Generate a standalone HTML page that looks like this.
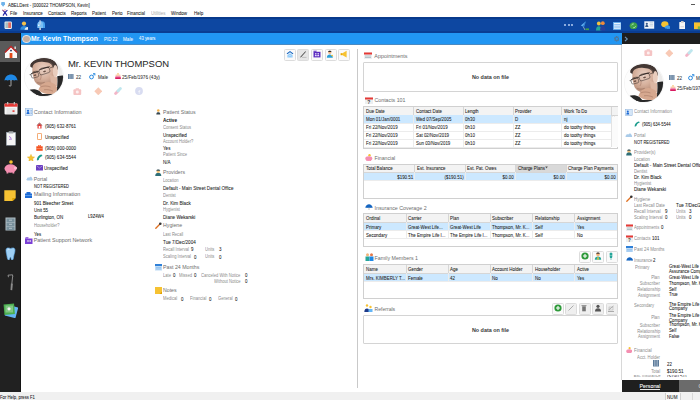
<!DOCTYPE html><html><head><meta charset="utf-8"><style>
html,body{margin:0;padding:0;width:700px;height:400px;overflow:hidden;background:#fff;}
body{position:relative;font-family:"Liberation Sans",sans-serif;}
.t{position:absolute;white-space:nowrap;}
.r{position:absolute;}
</style></head><body>
<div class="r" style="left:0px;top:0px;width:700px;height:9px;background:#fff"></div>
<svg class="r" style="left:0.9px;top:2px" width="4.2" height="5" viewBox="0 0 4.2 5"><path d="M0.2 0.6C0.2 0.2 .6 0 1 0h2.2c.4 0 .8.2.8.6v1.6L2.1 4.8 0.2 2.2z" fill="#6fb3ea"/></svg>
<div class="t" style="left:7.7px;top:0.20px;font-size:5.00px;line-height:10px;color:#222;transform:scaleX(0.88);transform-origin:0 50%;-webkit-text-stroke:0.06px currentColor;">ABELDent - [000022 THOMPSON, Kevin]</div>
<div class="r" style="left:691px;top:4px;width:4px;height:0.7px;background:#5a5a5a"></div>
<svg class="r" style="left:1.8px;top:9.2px" width="6" height="7" viewBox="0 0 6 7"><path d="M0.6 1.2L3 3.4 5.4 1.2M3 3.4L1 6.6M3 3.4L5 6.6" stroke="#2a2aa8" stroke-width="1.1" fill="none"/><path d="M0.4 0.9L2.2 2.4" stroke="#e57373" stroke-width="0.9"/><circle cx="3" cy="0.9" r="0.8" fill="#e9a0a0"/></svg>
<div class="t" style="left:10.1px;top:8.30px;font-size:5.11px;line-height:10px;color:#1a1a1a;transform:scaleX(0.88);transform-origin:0 50%;-webkit-text-stroke:0.06px currentColor;">File</div>
<div class="t" style="left:22.8px;top:8.30px;font-size:5.11px;line-height:10px;color:#1a1a1a;transform:scaleX(0.88);transform-origin:0 50%;-webkit-text-stroke:0.06px currentColor;">Insurance</div>
<div class="t" style="left:48px;top:8.30px;font-size:5.11px;line-height:10px;color:#1a1a1a;transform:scaleX(0.88);transform-origin:0 50%;-webkit-text-stroke:0.06px currentColor;">Contacts</div>
<div class="t" style="left:71.2px;top:8.30px;font-size:5.11px;line-height:10px;color:#1a1a1a;transform:scaleX(0.88);transform-origin:0 50%;-webkit-text-stroke:0.06px currentColor;">Reports</div>
<div class="t" style="left:91.8px;top:8.30px;font-size:5.11px;line-height:10px;color:#1a1a1a;transform:scaleX(0.88);transform-origin:0 50%;-webkit-text-stroke:0.06px currentColor;">Patient</div>
<div class="t" style="left:111.7px;top:8.30px;font-size:5.11px;line-height:10px;color:#1a1a1a;transform:scaleX(0.88);transform-origin:0 50%;-webkit-text-stroke:0.06px currentColor;">Perio</div>
<div class="t" style="left:127.4px;top:8.30px;font-size:5.11px;line-height:10px;color:#1a1a1a;transform:scaleX(0.88);transform-origin:0 50%;-webkit-text-stroke:0.06px currentColor;">Financial</div>
<div class="t" style="left:151px;top:8.30px;font-size:5.11px;line-height:10px;color:#a8a8a8;transform:scaleX(0.88);transform-origin:0 50%;">Utilities</div>
<div class="t" style="left:171.2px;top:8.30px;font-size:5.11px;line-height:10px;color:#1a1a1a;transform:scaleX(0.88);transform-origin:0 50%;-webkit-text-stroke:0.06px currentColor;">Window</div>
<div class="t" style="left:193.5px;top:8.30px;font-size:5.11px;line-height:10px;color:#1a1a1a;transform:scaleX(0.88);transform-origin:0 50%;-webkit-text-stroke:0.06px currentColor;">Help</div>
<div class="r" style="left:0px;top:17px;width:700px;height:16px;background:#0d47a1"></div>
<div class="r" style="left:0px;top:17px;width:700px;height:1.6px;background:#083a8c"></div>
<div class="r" style="left:0px;top:31px;width:700px;height:1.6px;background:#0a3d92"></div>
<svg class="r" style="left:3.8px;top:21px" width="8.4" height="8.4" viewBox="0 0 8.4 8.4"><rect x="0.5" y="0.5" width="7.4" height="7.4" rx="1.2" fill="#eef2f4"/><rect x="1.4" y="1.4" width="2.8" height="5.6" fill="#a7bfc2"/><rect x="4.2" y="1.4" width="2.8" height="5.6" fill="#df6a60"/></svg>
<svg class="r" style="left:19.5px;top:20.5px" width="8.5" height="9" viewBox="0 0 8.5 9"><circle cx="4" cy="2.6" r="2.1" fill="#f3c14a"/><path d="M0.3 8.8c0-2.8 1.6-3.8 3.7-3.8s3.7 1 3.7 3.8z" fill="#2f8fe0"/><path d="M4.5 8.8c.3-1.6 1.5-2.8 3.5-2.8v2.8z" fill="#e8f0f8"/></svg>
<svg class="r" style="left:36px;top:20.3px" width="9.5" height="10" viewBox="0 0 9.5 10"><path d="M1.5 4.5c0-2.2 1.5-3.3 3-3.3h1.5c1.8 0 3 1.2 3 3.3v3.5H1.5z" fill="#4aa3ee"/><path d="M1.5 4.5c0-2.2 1.5-3.3 3-3.3 1.5 0 2.5 1.2 2.5 3.3v3.5H1.5z" fill="#7cc0f5"/><rect x="3.6" y="0" width="0.9" height="4.5" fill="#d9d9e8"/><rect x="3.4" y="7.6" width="1.4" height="2.4" fill="#e0e0e0"/><circle cx="2.8" cy="5.2" r="0.8" fill="#fff"/></svg>
<svg class="r" style="left:564.2px;top:24.3px" width="2" height="2" viewBox="0 0 2 2"><circle cx="1" cy="1" r="0.9" fill="#c6dcfb"/></svg>
<svg class="r" style="left:567.5px;top:24.3px" width="2" height="2" viewBox="0 0 2 2"><circle cx="1" cy="1" r="0.9" fill="#c6dcfb"/></svg>
<svg class="r" style="left:570.8000000000001px;top:24.3px" width="2" height="2" viewBox="0 0 2 2"><circle cx="1" cy="1" r="0.9" fill="#c6dcfb"/></svg>
<svg class="r" style="left:579.8px;top:21px" width="9.5" height="9.5" viewBox="0 0 9.5 9.5"><path d="M6 0.3L0.8 4.6 2.8 5.6z" fill="#5fb0f2"/><path d="M6 0.3L2.8 5.6 4 6.3z" fill="#3d8fd8"/><path d="M3.4 6L5 9" stroke="#98a8b8" stroke-width="0.9"/><rect x="5.6" y="7.4" width="3.4" height="1.7" fill="#43a047"/></svg>
<svg class="r" style="left:596px;top:21px" width="9.5" height="9.5" viewBox="0 0 9.5 9.5"><circle cx="2.8" cy="2.5" r="1.9" fill="#f2c440"/><circle cx="6.8" cy="2.2" r="1.9" fill="#f08a3a"/><path d="M0 9.5c0-3 1-4.3 2.8-4.3s2.6 1.3 2.6 4.3z" fill="#26a69a"/><path d="M4 9.5c0-3.3 1-4.8 2.8-4.8s2.7 1.5 2.7 4.8z" fill="#283f9c"/></svg>
<svg class="r" style="left:612.8px;top:21.8px" width="8.4" height="8" viewBox="0 0 8.4 8"><rect x="0.4" y="0.4" width="7.6" height="7.2" fill="#e8f4fd" stroke="#5aa9ef" stroke-width="0.8"/><path d="M1.2 2.6h6M1.2 4.2h6M1.2 5.8h6" stroke="#6aaef0" stroke-width="0.7"/></svg>
<svg class="r" style="left:629.2px;top:21.6px" width="9" height="7.6" viewBox="0 0 9 7.6"><path d="M4.5 0.3C2.2 0.3 0.6 2 0.6 3.8c0 2 1.6 3.5 3.9 3.5s3.9-1.5 3.9-3.5C8.4 2 6.8 0.3 4.5 0.3z" fill="#3fa24a"/><path d="M2.5 3.3c.5-1 1.3-1.4 2.2-1.3M6.5 4.4c-.4 1-1.3 1.4-2.2 1.3" stroke="#c9ecc9" stroke-width="0.9" fill="none"/></svg>
<svg class="r" style="left:644.2px;top:21.2px" width="10.5" height="8.3" viewBox="0 0 10.5 8.3"><rect x="0.3" y="0.3" width="9.9" height="7.4" fill="#f2f6fa"/><circle cx="2.8" cy="2.8" r="1.1" fill="#37598a"/><path d="M1.2 6c0-1.4.7-2 1.6-2s1.6.6 1.6 2z" fill="#37598a"/><path d="M5.6 1.8h3.5M5.6 3.4h3.5M5.6 5h3.5" stroke="#b0c4d8" stroke-width="0.7"/></svg>
<svg class="r" style="left:660.8px;top:21.2px" width="9.5" height="8" viewBox="0 0 9.5 8"><ellipse cx="3.8" cy="3.2" rx="3.6" ry="3" fill="#f6c232"/><path d="M3.5 6.8C4 4.8 5.8 4 7.2 4.3 8.8 4.7 9.5 6 9.3 7.2L9.5 8 8 7.8C6.5 8.2 4.5 8 3.5 6.8z" fill="#3f9ae8"/></svg>
<svg class="r" style="left:678.5px;top:20.8px" width="6.6" height="8.6" viewBox="0 0 6.6 8.6"><rect x="0.3" y="1" width="6" height="7.4" rx="0.4" fill="#f5f5f5"/><rect x="2" y="0" width="2.6" height="1.8" fill="#c9c9c9"/><path d="M1.5 5.8h3.5" stroke="#aab" stroke-width="0.5"/></svg>
<svg class="r" style="left:693.5px;top:22.4px" width="6.5" height="7.2" viewBox="0 0 6.5 7.2"><rect x="0" y="0.4" width="6.5" height="6.8" fill="#f6c232"/><rect x="3.8" y="4.4" width="2.7" height="2.8" fill="#7cb342"/></svg>
<div class="r" style="left:0px;top:33px;width:21px;height:359px;background:#212121"></div>
<div class="r" style="left:20px;top:33px;width:1px;height:359px;background:#141414"></div>
<div class="r" style="left:0px;top:41px;width:20px;height:21px;background:#5a5a5a"></div>
<div class="r" style="left:21px;top:32.6px;width:601px;height:12px;background:#2196f3"></div>
<div class="r" style="left:21px;top:43.7px;width:601px;height:1.2px;background:#4a8ac2"></div>
<div class="r" style="left:22px;top:34.6px;width:6.8px;height:6.8px;border-radius:50%;background:#c4ad9f;border:0.7px solid #d5e2ee"></div>
<div class="t" style="left:31px;top:33.80px;font-size:6.80px;line-height:10px;color:#fff;font-weight:700;transform:scaleX(1.0);transform-origin:0 50%;">Mr. Kevin Thompson</div>
<div class="t" style="left:104.3px;top:34.40px;font-size:5.00px;line-height:10px;color:#f2f8ff;transform:scaleX(0.88);transform-origin:0 50%;-webkit-text-stroke:0.06px currentColor;">PID 22</div>
<div class="t" style="left:123.1px;top:34.40px;font-size:5.23px;line-height:10px;color:#f2f8ff;transform:scaleX(0.88);transform-origin:0 50%;-webkit-text-stroke:0.06px currentColor;">Male</div>
<div class="t" style="left:139.1px;top:34.40px;font-size:4.89px;line-height:10px;color:#f2f8ff;transform:scaleX(0.88);transform-origin:0 50%;-webkit-text-stroke:0.06px currentColor;">43 years</div>
<svg class="r" style="left:613.5px;top:36px" width="5.6" height="5.6" viewBox="0 0 5.6 5.6"><circle cx="2.8" cy="2.8" r="2.1" fill="none" stroke="#58708a" stroke-width="1.3" stroke-dasharray="0.9 0.45"/><circle cx="2.8" cy="2.8" r="1.5" fill="none" stroke="#58708a" stroke-width="0.6"/></svg>
<div class="r" style="left:622px;top:33px;width:78px;height:11.2px;background:#1e1e1e"></div>
<svg class="r" style="left:624.4px;top:36px" width="4.5" height="6" viewBox="0 0 4.5 6"><path d="M1 0.8L3.3 3 1 5.2" stroke="#6b92b8" stroke-width="1.1" fill="none"/></svg>
<div class="r" style="left:21px;top:44.9px;width:600px;height:347px;background:#fff"></div>
<div class="r" style="left:357px;top:48.5px;width:0.8px;height:339px;background:#c9c9c9"></div>
<div class="r" style="left:621px;top:44.5px;width:0.8px;height:335.5px;background:#d8d8d8"></div>
<div class="r" style="left:0px;top:392px;width:700px;height:8px;background:#f0f0f0"></div>
<div class="t" style="left:0px;top:392.50px;font-size:4.81px;line-height:10px;color:#222;transform:scaleX(0.88);transform-origin:0 50%;-webkit-text-stroke:0.06px currentColor;">For Help, press F1</div>
<svg class="r" style="left:3.8px;top:44.8px" width="14" height="13.5" viewBox="0 0 14 13.5"><path d="M7 1L1 6.8V13h12V6.8z" fill="#fafafa"/><path d="M7 0.6L0.4 7l1 1L7 2.6 12.6 8l1-1z" fill="#b71c1c"/><rect x="10.5" y="1.5" width="1.3" height="2.5" fill="#f0f0f0"/><rect x="5.6" y="8" width="2.8" height="5" fill="#e64a19"/><circle cx="7" cy="5.6" r="0.9" fill="#1a2a5a"/></svg>
<svg class="r" style="left:4px;top:74px" width="14" height="13" viewBox="0 0 14 13"><path d="M0.5 6.5C1 2.5 4 0.5 7 0.5s6 2 6.5 6c-1-.8-2-.8-3.2 0-1-.8-2.2-.8-3.3 0-1.1-.8-2.3-.8-3.3 0-1.2-.8-2.2-.8-3.2 0z" fill="#1e88e5"/><path d="M7 6v5.3c0 1.2-1.8 1.2-1.8 0" stroke="#ddd" stroke-width="0.7" fill="none"/></svg>
<svg class="r" style="left:4px;top:102px" width="14" height="13" viewBox="0 0 14 13"><rect x="0.5" y="1.5" width="13" height="11" rx="1" fill="#f5f5f5"/><rect x="0.5" y="1.5" width="13" height="3.2" fill="#e53935"/><rect x="3" y="0" width="1.3" height="2.5" fill="#bbb"/><rect x="9.7" y="0" width="1.3" height="2.5" fill="#bbb"/><path d="M2.5 7h9M2.5 9h9M2.5 11h9" stroke="#cfcfcf" stroke-width="0.8"/><rect x="8.5" y="8.3" width="2" height="1.6" fill="#e53935"/></svg>
<svg class="r" style="left:5.5px;top:131px" width="10" height="14.5" viewBox="0 0 10 14.5"><rect x="0.4" y="1.4" width="9.2" height="12.8" fill="#f5f5f5" stroke="#9ab" stroke-width="0.4"/><rect x="2.6" y="0.2" width="4.8" height="2.4" rx="0.5" fill="#a0a4a8"/><path d="M3 5.5c1 .3 2 1 2.2 2.2M3.2 8.5c.8-.4 1.6-.5 2.3 0" stroke="#9c5fd0" stroke-width="0.9" fill="none"/></svg>
<svg class="r" style="left:3px;top:160px" width="15" height="14" viewBox="0 0 15 14"><circle cx="8" cy="2" r="1.8" fill="#f6c232"/><ellipse cx="7.5" cy="8.5" rx="6" ry="4.3" fill="#f48fb1"/><rect x="3.5" y="11" width="1.8" height="2.5" fill="#f48fb1"/><rect x="9.5" y="11" width="1.8" height="2.5" fill="#f48fb1"/><circle cx="12.5" cy="8" r="1.6" fill="#f8bbd0"/></svg>
<svg class="r" style="left:4.4px;top:189.8px" width="12" height="11.6" viewBox="0 0 12 11.6"><path d="M0.3 0.3h11.4v7.6l-3.4 3.4H0.3z" fill="#f6c232"/><path d="M11.7 7.9H8.3v3.4z" fill="#dca000"/></svg>
<svg class="r" style="left:5px;top:217px" width="11" height="14" viewBox="0 0 11 14"><rect x="0.5" y="0.5" width="10" height="13" fill="#b0bec5"/><rect x="1.5" y="1.5" width="8" height="3.5" fill="#78909c"/><rect x="1.5" y="5.6" width="8" height="3.5" fill="#78909c"/><rect x="1.5" y="9.6" width="8" height="3.4" fill="#78909c"/><path d="M4 3.2h3M4 7.3h3M4 11.3h3" stroke="#cfd8dc" stroke-width="0.7"/></svg>
<svg class="r" style="left:5px;top:246.5px" width="11" height="13.5" viewBox="0 0 11 13.5"><path d="M1 3C1 0.5 3.5 0.5 5.5 1.5 7.5 0.5 10 0.5 10 3c0 3-1 4-1.3 6.5-.3 2.5-.7 3.6-1.7 3.6s-1-3.2-1.5-3.2S4.5 13.1 3.8 13.1 2.3 12 2 9.5C1.7 7 1 6 1 3z" fill="#9fd0f5" stroke="#5aa6e6" stroke-width="0.6"/><path d="M2.6 3.2c.3-1 1.2-1.3 2-1" stroke="#e8f5fe" stroke-width="0.8" fill="none"/></svg>
<svg class="r" style="left:6px;top:273.5px" width="9" height="17" viewBox="0 0 9 17"><path d="M2.5 3.2L2 1.2 6.5 0.8 6.8 3" stroke="#a8a8a8" stroke-width="0.8" fill="none"/><path d="M6.6 2.8L5.8 10" stroke="#9a9a9a" stroke-width="0.9"/><path d="M4.9 9.5L6.9 9.8 6.2 16.3 4.5 16z" fill="#8d8d8d"/></svg>
<svg class="r" style="left:3px;top:303px" width="15" height="15" viewBox="0 0 15 15"><rect x="3" y="3" width="11" height="11" fill="#64b5f6" transform="rotate(15 8.5 8.5)"/><rect x="1" y="1" width="10.5" height="10.5" fill="#4caf50" transform="rotate(-5 6 6)"/><rect x="2.5" y="2.5" width="7.5" height="7" fill="#81c784"/><circle cx="6" cy="5.8" r="1.6" fill="#f5f5f5"/></svg>
<svg class="r" style="left:24.3px;top:57px" width="40" height="40" viewBox="0 0 40 40"><defs><clipPath id="pcL"><circle cx="20" cy="20" r="19.1"/></clipPath>
<radialGradient id="fgL" cx="0.5" cy="0.3" r="0.7"><stop offset="0" stop-color="#e9d2c6"/><stop offset="0.55" stop-color="#d6b09c"/><stop offset="1" stop-color="#b68b76"/></radialGradient></defs>
<circle cx="20" cy="20" r="19.6" fill="#fff" stroke="#efefef" stroke-width="0.6"/>
<g clip-path="url(#pcL)">
<rect x="0" y="0" width="40" height="40" fill="#fdfdfd"/>
<path d="M33 6 L40 8 L40 22 L35 20z" fill="#ecebea"/>
<path d="M8.2 9 C9 5.5 13 4 18 4.2 C25 4.4 29 7 30 12 L31 21 C31 27 27 30 22 30 C17 30 12.5 27.5 10.5 24 L8.5 17z" fill="url(#fgL)"/>
<path d="M26 18 L33 20 L33.5 29 L27 29z" fill="#dcb7a3"/>
<path d="M6.2 9.5 C6 3.5 13 0.8 20.5 0.9 C28 1 33 4.5 34 11.5 L33.5 13 L30.5 13 L29.8 9.5 C27.5 6.5 24 5 18 4.8 C13.5 4.7 10.5 5.8 9 8.5 L8.4 11z" fill="#433733"/>
<path d="M24.5 4.6 C28 5.8 30 8.2 30.5 11.5 L30.8 13.5 L29.6 13 C29 9.5 27 6.5 24.5 4.6z" fill="#5e4d45"/>
<ellipse cx="31.3" cy="14.2" rx="2.5" ry="6.2" fill="#e9cdbd"/>
<path d="M33.2 19.2 C35 19 37.5 18.5 40 18.5 L40 40 L31 40 C33 34 34 27 33.2 19.2z" fill="#282828"/>
<path d="M0 40 L4 33.5 C8 31.5 12 32 15.5 34 L21 40z" fill="#282828"/>
<rect x="12" y="37" width="20" height="3" fill="#282828"/>
<path d="M8.5 15.2 C10.5 14.2 12.8 14 14.6 14.4 M16.5 11.6 C19 10.6 22.5 10.2 25 10.4" stroke="#5a463c" stroke-width="0.7" fill="none"/>
<ellipse cx="11" cy="18.2" rx="1.4" ry="0.75" fill="#6a5046" transform="rotate(-15 11 18.2)"/>
<ellipse cx="20.5" cy="14.4" rx="1.5" ry="0.8" fill="#6a5046" transform="rotate(-18 20.5 14.4)"/>
<path d="M16.8 17 C17.3 20 17 22 15.8 23" stroke="#a87c6a" stroke-width="0.6" fill="none"/>
<rect x="7.2" y="15.5" width="7.4" height="5" rx="1.4" fill="none" stroke="#2a2220" stroke-width="0.45" transform="rotate(-15 10.9 18)"/>
<rect x="15.2" y="11.2" width="10.6" height="5.6" rx="1.6" fill="none" stroke="#2a2220" stroke-width="0.45" transform="rotate(-18 20.5 14)"/>
<path d="M7.2 16.6 L14.6 14.4 M15.2 12.8 L25.8 9.6" stroke="#1d1817" stroke-width="0.65"/>
<path d="M25.8 11 L30 9.5 M7.2 17.8 L5.6 17.6" stroke="#2a2220" stroke-width="0.55"/>
<path d="M14.5 33 C15.5 28.5 19.5 24.8 24.5 25 C29 25.3 32.5 27.5 33.2 31.5 L32 36.7 C26 37.5 19 37.5 14.5 33z" fill="#d6a88f"/>
<path d="M16.5 30 C19.5 28.5 23.5 28.8 26.5 30 M20 32.8 C23 32.3 26 32.8 29 34.2" stroke="#a07360" stroke-width="0.55" fill="none"/>
<path d="M13.2 25.5 C15.5 26.5 18.5 26.3 20.7 25.3" stroke="#946a58" stroke-width="0.6" fill="none"/>
</g></svg>
<div class="t" style="left:67.6px;top:59.30px;font-size:9.95px;line-height:10px;color:#2a2a2a;transform:scaleX(0.95);transform-origin:0 50%;-webkit-text-stroke:0.06px currentColor;">Mr. KEVIN THOMPSON</div>
<svg class="r" style="left:68.2px;top:73.5px" width="5.5" height="5.5" viewBox="0 0 5.5 5.5"><rect x="0" y="0" width="5.5" height="5.5" fill="#5c7a99"/><path d="M1.4 0v5.5M2.8 0v5.5M4.2 0v5.5" stroke="#c9d6e3" stroke-width="0.5"/></svg>
<div class="t" style="left:76px;top:71.90px;font-size:5.23px;line-height:10px;color:#333;transform:scaleX(0.88);transform-origin:0 50%;-webkit-text-stroke:0.06px currentColor;">22</div>
<svg class="r" style="left:89px;top:73px" width="6.5" height="6.5" viewBox="0 0 6.5 6.5"><circle cx="2.5" cy="4" r="1.9" fill="none" stroke="#2b8be0" stroke-width="1"/><path d="M3.8 2.7L5.8 0.7M4 0.6h1.9v1.9" stroke="#2b8be0" stroke-width="0.9" fill="none"/></svg>
<div class="t" style="left:97.7px;top:71.90px;font-size:5.23px;line-height:10px;color:#333;transform:scaleX(0.88);transform-origin:0 50%;-webkit-text-stroke:0.06px currentColor;">Male</div>
<svg class="r" style="left:115px;top:73px" width="6" height="6" viewBox="0 0 6 6"><rect x="0.6" y="1.6" width="4.8" height="1.3" fill="#f9c9a8"/><rect x="0.4" y="2.9" width="5.2" height="1.3" fill="#f48fb1"/><rect x="0.2" y="4.2" width="5.6" height="1.8" fill="#d81b60"/><rect x="2.6" y="0" width="0.8" height="1.6" fill="#f6a623"/></svg>
<div class="t" style="left:122px;top:71.90px;font-size:5.28px;line-height:10px;color:#333;transform:scaleX(0.88);transform-origin:0 50%;-webkit-text-stroke:0.06px currentColor;">25/Feb/1976 (43y)</div>
<svg class="r" style="left:73.4px;top:87.5px" width="8.6" height="7.2" viewBox="0 0 8.6 7.2"><rect x="0.4" y="1.3" width="7.8" height="5.6" rx="0.9" fill="#f5c4c4"/><rect x="2.6" y="0.2" width="3.4" height="1.6" rx="0.4" fill="#f5c4c4"/><circle cx="4.3" cy="4.1" r="1.5" fill="#fdf0f0"/></svg>
<svg class="r" style="left:93.8px;top:86.8px" width="8.6" height="8.6" viewBox="0 0 8.6 8.6"><path d="M4.3 0.3L8.3 4.3 4.3 8.3 0.3 4.3z" fill="#f8c9b5"/></svg>
<svg class="r" style="left:114.2px;top:87.1px" width="8" height="8" viewBox="0 0 8 8"><path d="M1.6 6.4L4 4" stroke="#f3b6c8" stroke-width="2.8" stroke-linecap="round"/><path d="M4 4L6.4 1.6" stroke="#bfe7ee" stroke-width="2.8" stroke-linecap="round"/></svg>
<svg class="r" style="left:134.8px;top:87.1px" width="8" height="8" viewBox="0 0 8 8"><circle cx="4" cy="4" r="3.9" fill="#d8dcf1"/><path d="M4.2 6.8V3.6h1.1M3.2 4.6h2" stroke="#f4f5fb" stroke-width="0.8" fill="none"/></svg>
<svg class="r" style="left:24.5px;top:108px" width="8" height="8" viewBox="0 0 8 8"><rect x="0.3" y="0.3" width="7.4" height="7.4" fill="#d6e6f7" stroke="#8fb4dc" stroke-width="0.5"/><circle cx="3" cy="2.8" r="1.1" fill="#1e6bd6"/><path d="M1.5 6c0-1.5.7-2 1.5-2s1.5.5 1.5 2z" fill="#1e6bd6"/><path d="M5.5 2.5h1.5M5.5 4h1.5M5.5 5.5h1.5" stroke="#6a9bd8" stroke-width="0.5"/></svg>
<div class="t" style="left:33.8px;top:106.80px;font-size:5.47px;line-height:10px;color:#6d6d6d;transform:scaleX(1.0);transform-origin:0 50%;">Contact Information</div>
<svg class="r" style="left:35.5px;top:122px" width="7" height="7" viewBox="0 0 7 7"><path d="M3.5 0.5L0.5 3.5h1V6.5h4V3.5h1z" fill="#e53935"/><path d="M3.5 0.5L0.5 3.5h1l2-2 2 2h1z" fill="#999"/><rect x="2.7" y="4" width="1.6" height="2.5" fill="#fff"/></svg>
<div class="t" style="left:44.7px;top:120.90px;font-size:5.17px;line-height:10px;color:#1a1a1a;transform:scaleX(0.88);transform-origin:0 50%;-webkit-text-stroke:0.06px currentColor;">(905) 632-8761</div>
<svg class="r" style="left:37px;top:133px" width="5" height="7" viewBox="0 0 5 7"><rect x="0.4" y="0.4" width="4.2" height="6.2" rx="0.8" fill="none" stroke="#f0883a" stroke-width="0.8"/></svg>
<div class="t" style="left:44.7px;top:132.10px;font-size:5.17px;line-height:10px;color:#1a1a1a;transform:scaleX(0.88);transform-origin:0 50%;-webkit-text-stroke:0.06px currentColor;">Unspecified</div>
<svg class="r" style="left:36px;top:144.5px" width="7" height="6" viewBox="0 0 7 6"><rect x="0.3" y="1.3" width="6.4" height="4.5" fill="#f4511e"/><rect x="2.3" y="0.2" width="2.4" height="1.4" fill="none" stroke="#f4511e" stroke-width="0.6"/><rect x="0.3" y="3" width="6.4" height="0.4" fill="#ffccbc"/></svg>
<div class="t" style="left:44.7px;top:143.10px;font-size:5.17px;line-height:10px;color:#1a1a1a;transform:scaleX(0.88);transform-origin:0 50%;-webkit-text-stroke:0.06px currentColor;">(905) 000-0000</div>
<svg class="r" style="left:26.5px;top:153.5px" width="8" height="7" viewBox="0 0 8 7"><path d="M4 0.3l1.1 2.4 2.6.3-2 1.8.6 2.6L4 6 1.7 7.4l.6-2.6-2-1.8 2.6-.3z" fill="#f6c232" stroke="#d9a400" stroke-width="0.3"/></svg>
<svg class="r" style="left:36px;top:153.5px" width="7" height="7" viewBox="0 0 7 7"><path d="M1 6.5C0.5 4 2.5 1 5.5 0.5l1 1.5c-2 .5-3.5 2-3.8 4z" fill="#1a9b8c"/></svg>
<div class="t" style="left:44.7px;top:152.40px;font-size:5.17px;line-height:10px;color:#1a1a1a;transform:scaleX(0.88);transform-origin:0 50%;-webkit-text-stroke:0.06px currentColor;">(905) 634-5544</div>
<svg class="r" style="left:35.5px;top:165px" width="7" height="5.5" viewBox="0 0 7 5.5"><rect x="0" y="0" width="7" height="5.5" fill="#6a3fc2"/><path d="M0.3 0.5L3.5 3 6.7 0.5" stroke="#c9b5ef" stroke-width="0.6" fill="none"/></svg>
<div class="t" style="left:43.7px;top:163.40px;font-size:5.17px;line-height:10px;color:#1a1a1a;transform:scaleX(0.88);transform-origin:0 50%;-webkit-text-stroke:0.06px currentColor;">Unspecified</div>
<svg class="r" style="left:25.5px;top:176px" width="7" height="5" viewBox="0 0 7 5"><path d="M1.5 4.6C0.3 4.6 0 3.2 1 2.8 1 1.5 2.5 1 3.2 1.8 3.8 0.3 6 0.5 6 2.3 7 2.5 7 4.6 5.8 4.6z" fill="#a9cbe9"/></svg>
<div class="t" style="left:33.7px;top:173.50px;font-size:5.20px;line-height:10px;color:#6d6d6d;transform:scaleX(1.0);transform-origin:0 50%;">Portal</div>
<div class="t" style="left:33.7px;top:181.70px;font-size:4.49px;line-height:10px;color:#1a1a1a;transform:scaleX(0.88);transform-origin:0 50%;-webkit-text-stroke:0.06px currentColor;">NOT REGISTERED</div>
<svg class="r" style="left:25px;top:191.5px" width="7" height="6.5" viewBox="0 0 7 6.5"><rect x="0" y="1.5" width="7" height="5" fill="#1e6bd6"/><rect x="1.5" y="0" width="4" height="2" fill="#1e6bd6"/><path d="M0 3.5h7" stroke="#90caf9" stroke-width="0.5"/></svg>
<div class="t" style="left:33.7px;top:189.30px;font-size:5.54px;line-height:10px;color:#6d6d6d;transform:scaleX(1.0);transform-origin:0 50%;">Mailing Information</div>
<div class="t" style="left:33.7px;top:197.90px;font-size:5.06px;line-height:10px;color:#1a1a1a;transform:scaleX(0.88);transform-origin:0 50%;-webkit-text-stroke:0.06px currentColor;">901 Bleecher Street</div>
<div class="t" style="left:33.7px;top:204.90px;font-size:5.06px;line-height:10px;color:#1a1a1a;transform:scaleX(0.88);transform-origin:0 50%;-webkit-text-stroke:0.06px currentColor;">Unit 55</div>
<div class="t" style="left:33.7px;top:212.15px;font-size:5.06px;line-height:10px;color:#1a1a1a;transform:scaleX(0.88);transform-origin:0 50%;-webkit-text-stroke:0.06px currentColor;">Burlington, ON</div>
<div class="t" style="left:87.8px;top:212.45px;font-size:4.77px;line-height:10px;color:#1a1a1a;transform:scaleX(0.88);transform-origin:0 50%;-webkit-text-stroke:0.06px currentColor;">L9Z4W4</div>
<div class="t" style="left:33.7px;top:221.20px;font-size:4.66px;line-height:10px;color:#8a8a8a;transform:scaleX(0.88);transform-origin:0 50%;">Householder?</div>
<div class="t" style="left:33.7px;top:228.65px;font-size:5.06px;line-height:10px;color:#1a1a1a;transform:scaleX(0.88);transform-origin:0 50%;-webkit-text-stroke:0.06px currentColor;">Yes</div>
<svg class="r" style="left:25px;top:236.5px" width="7.5" height="7" viewBox="0 0 7.5 7"><rect x="0" y="1.5" width="7.5" height="5.5" fill="#7b3fd6"/><path d="M0 1.5h3l.7-1.3h-3z" fill="#7b3fd6"/><circle cx="3" cy="4" r="0.9" fill="#d1c4e9"/><circle cx="5.2" cy="4" r="0.9" fill="#d1c4e9"/></svg>
<div class="t" style="left:33.7px;top:234.80px;font-size:5.42px;line-height:10px;color:#6d6d6d;transform:scaleX(1.0);transform-origin:0 50%;">Patient Support Network</div>
<svg class="r" style="left:156.3px;top:109.4px" width="4.6" height="5.8" viewBox="0 0 4.6 5.8"><circle cx="2.3" cy="1.5" r="1.3" fill="#f2b04a"/><path d="M0.3 5.6c0-1.9.8-2.4 2-2.4s2 .5 2 2.4z" fill="#37474f"/></svg>
<div class="t" style="left:163px;top:106.80px;font-size:5.22px;line-height:10px;color:#6d6d6d;transform:scaleX(1.0);transform-origin:0 50%;">Patient Status</div>
<div class="t" style="left:163px;top:115.40px;font-size:5.30px;line-height:10px;color:#111;font-weight:700;transform:scaleX(0.88);transform-origin:0 50%;">Active</div>
<div class="t" style="left:163px;top:122.70px;font-size:4.66px;line-height:10px;color:#8a8a8a;transform:scaleX(0.88);transform-origin:0 50%;">Consent Status</div>
<div class="t" style="left:163px;top:129.90px;font-size:5.17px;line-height:10px;color:#1a1a1a;transform:scaleX(0.88);transform-origin:0 50%;-webkit-text-stroke:0.06px currentColor;">Unspecified</div>
<div class="t" style="left:163px;top:136.95px;font-size:4.66px;line-height:10px;color:#8a8a8a;transform:scaleX(0.88);transform-origin:0 50%;">Account Holder?</div>
<div class="t" style="left:163px;top:142.90px;font-size:5.17px;line-height:10px;color:#1a1a1a;transform:scaleX(0.88);transform-origin:0 50%;-webkit-text-stroke:0.06px currentColor;">Yes</div>
<div class="t" style="left:163px;top:150.20px;font-size:4.66px;line-height:10px;color:#8a8a8a;transform:scaleX(0.88);transform-origin:0 50%;">Patient Since</div>
<div class="t" style="left:163px;top:156.90px;font-size:5.17px;line-height:10px;color:#1a1a1a;transform:scaleX(0.88);transform-origin:0 50%;-webkit-text-stroke:0.06px currentColor;">N/A</div>
<svg class="r" style="left:155.3px;top:169px" width="6.5" height="7" viewBox="0 0 6.5 7"><circle cx="3.25" cy="2.4" r="1.7" fill="#f0c27a"/><path d="M1.3 1.8C1.3 0.2 5.2 0.2 5.2 1.8z" fill="#2b4a56"/><path d="M0.2 7c0-2.6 1.3-3.1 3.05-3.1s3.05.5 3.05 3.1z" fill="#2f6f78"/></svg>
<div class="t" style="left:163px;top:167.30px;font-size:5.22px;line-height:10px;color:#6d6d6d;transform:scaleX(1.0);transform-origin:0 50%;">Providers</div>
<div class="t" style="left:163px;top:175.70px;font-size:4.66px;line-height:10px;color:#8a8a8a;transform:scaleX(0.88);transform-origin:0 50%;">Location</div>
<div class="t" style="left:163px;top:182.90px;font-size:5.28px;line-height:10px;color:#1a1a1a;transform:scaleX(0.88);transform-origin:0 50%;-webkit-text-stroke:0.06px currentColor;">Default - Main Street Dental Office</div>
<div class="t" style="left:163px;top:190.70px;font-size:4.66px;line-height:10px;color:#8a8a8a;transform:scaleX(0.88);transform-origin:0 50%;">Dentist</div>
<div class="t" style="left:163px;top:197.90px;font-size:5.28px;line-height:10px;color:#1a1a1a;transform:scaleX(0.88);transform-origin:0 50%;-webkit-text-stroke:0.06px currentColor;">Dr. Kim Black</div>
<div class="t" style="left:163px;top:205.20px;font-size:4.66px;line-height:10px;color:#8a8a8a;transform:scaleX(0.88);transform-origin:0 50%;">Hygienist</div>
<div class="t" style="left:163px;top:212.40px;font-size:5.28px;line-height:10px;color:#1a1a1a;transform:scaleX(0.88);transform-origin:0 50%;-webkit-text-stroke:0.06px currentColor;">Diane Wekarski</div>
<svg class="r" style="left:154.5px;top:222px" width="7" height="7" viewBox="0 0 7 7"><path d="M0.8 6.3L4.5 2.5" stroke="#e07020" stroke-width="1.3" stroke-linecap="round"/><circle cx="5.3" cy="1.7" r="1.3" fill="#333"/></svg>
<div class="t" style="left:163px;top:220.30px;font-size:5.22px;line-height:10px;color:#6d6d6d;transform:scaleX(1.0);transform-origin:0 50%;">Hygiene</div>
<div class="t" style="left:163px;top:230.20px;font-size:4.66px;line-height:10px;color:#8a8a8a;transform:scaleX(0.88);transform-origin:0 50%;">Last Recall</div>
<div class="t" style="left:163px;top:236.90px;font-size:5.28px;line-height:10px;color:#1a1a1a;transform:scaleX(0.88);transform-origin:0 50%;-webkit-text-stroke:0.06px currentColor;">Tue 7/Dec/2004</div>
<div class="t" style="left:163px;top:244.70px;font-size:4.66px;line-height:10px;color:#8a8a8a;transform:scaleX(0.88);transform-origin:0 50%;">Recall Interval</div>
<div class="t" style="left:191px;top:244.10px;font-size:5.00px;line-height:10px;color:#222;transform:scaleX(0.88);transform-origin:0 50%;-webkit-text-stroke:0.06px currentColor;">9</div>
<div class="t" style="left:204.5px;top:244.70px;font-size:4.66px;line-height:10px;color:#8a8a8a;transform:scaleX(0.88);transform-origin:0 50%;">Units</div>
<div class="t" style="left:218.5px;top:244.10px;font-size:5.00px;line-height:10px;color:#222;transform:scaleX(0.88);transform-origin:0 50%;-webkit-text-stroke:0.06px currentColor;">3</div>
<div class="t" style="left:163px;top:252.20px;font-size:4.66px;line-height:10px;color:#8a8a8a;transform:scaleX(0.88);transform-origin:0 50%;">Scaling Interval</div>
<div class="t" style="left:194.2px;top:251.60px;font-size:5.00px;line-height:10px;color:#222;transform:scaleX(0.88);transform-origin:0 50%;-webkit-text-stroke:0.06px currentColor;">0</div>
<div class="t" style="left:204.5px;top:252.20px;font-size:4.66px;line-height:10px;color:#8a8a8a;transform:scaleX(0.88);transform-origin:0 50%;">Units</div>
<div class="t" style="left:218.5px;top:251.60px;font-size:5.00px;line-height:10px;color:#222;transform:scaleX(0.88);transform-origin:0 50%;-webkit-text-stroke:0.06px currentColor;">0</div>
<svg class="r" style="left:155px;top:264px" width="7" height="6.5" viewBox="0 0 7 6.5"><rect x="0" y="0" width="7" height="6.5" fill="#bfdcf6"/><rect x="0" y="0" width="7" height="2" fill="#2f80d8"/><path d="M1 3.6h5M1 5h5" stroke="#6aa8e8" stroke-width="0.5"/></svg>
<div class="t" style="left:163px;top:261.80px;font-size:5.22px;line-height:10px;color:#6d6d6d;transform:scaleX(1.0);transform-origin:0 50%;">Past 24 Months</div>
<div class="t" style="left:163px;top:270.70px;font-size:4.66px;line-height:10px;color:#8a8a8a;transform:scaleX(0.88);transform-origin:0 50%;">Late</div>
<div class="t" style="left:173.3px;top:270.10px;font-size:5.00px;line-height:10px;color:#222;transform:scaleX(0.88);transform-origin:0 50%;-webkit-text-stroke:0.06px currentColor;">0</div>
<div class="t" style="left:178.75px;top:270.70px;font-size:4.66px;line-height:10px;color:#8a8a8a;transform:scaleX(0.88);transform-origin:0 50%;">Missed</div>
<div class="t" style="left:194px;top:270.10px;font-size:5.00px;line-height:10px;color:#222;transform:scaleX(0.88);transform-origin:0 50%;-webkit-text-stroke:0.06px currentColor;">0</div>
<div class="t" style="left:200.75px;top:270.70px;font-size:4.66px;line-height:10px;color:#8a8a8a;transform:scaleX(0.88);transform-origin:0 50%;">Canceled With Notice</div>
<div class="t" style="left:245.3px;top:270.10px;font-size:5.00px;line-height:10px;color:#222;transform:scaleX(0.88);transform-origin:0 50%;-webkit-text-stroke:0.06px currentColor;">0</div>
<div class="t" style="left:213.75px;top:276.95px;font-size:4.66px;line-height:10px;color:#8a8a8a;transform:scaleX(0.88);transform-origin:0 50%;">Without Notice</div>
<div class="t" style="left:245.3px;top:276.35px;font-size:5.00px;line-height:10px;color:#222;transform:scaleX(0.88);transform-origin:0 50%;-webkit-text-stroke:0.06px currentColor;">0</div>
<svg class="r" style="left:155px;top:287px" width="7" height="7" viewBox="0 0 7 7"><rect x="0" y="0" width="7" height="7" fill="#f6c232"/><path d="M7 4.5L4.5 7H7z" fill="#e0a000"/></svg>
<div class="t" style="left:163px;top:285.10px;font-size:5.22px;line-height:10px;color:#6d6d6d;transform:scaleX(1.0);transform-origin:0 50%;">Notes</div>
<div class="t" style="left:163px;top:294.20px;font-size:4.66px;line-height:10px;color:#8a8a8a;transform:scaleX(0.88);transform-origin:0 50%;">Medical</div>
<div class="t" style="left:181px;top:293.60px;font-size:5.00px;line-height:10px;color:#222;transform:scaleX(0.88);transform-origin:0 50%;-webkit-text-stroke:0.06px currentColor;">0</div>
<div class="t" style="left:189.5px;top:294.20px;font-size:4.66px;line-height:10px;color:#8a8a8a;transform:scaleX(0.88);transform-origin:0 50%;">Financial</div>
<div class="t" style="left:208.6px;top:293.60px;font-size:5.00px;line-height:10px;color:#222;transform:scaleX(0.88);transform-origin:0 50%;-webkit-text-stroke:0.06px currentColor;">0</div>
<div class="t" style="left:218px;top:294.20px;font-size:4.66px;line-height:10px;color:#8a8a8a;transform:scaleX(0.88);transform-origin:0 50%;">General</div>
<div class="t" style="left:234.7px;top:293.60px;font-size:5.00px;line-height:10px;color:#222;transform:scaleX(0.88);transform-origin:0 50%;-webkit-text-stroke:0.06px currentColor;">0</div>
<div class="r" style="left:284.3px;top:48.6px;width:10px;height:10px;border:0.5px solid #dcdcdc;border-radius:1.5px;background:#fafafa"></div>
<svg class="r" style="left:285.8px;top:50.1px" width="8" height="8" viewBox="0 0 8 8"><path d="M0.6 3.6L4 1 7.4 3.6 6.6 4.3 4 2.3 1.4 4.3z" fill="#1565c0"/><path d="M1.4 5.3L4 3.3 6.6 5.3V7.6H1.4z" fill="#90caf9"/><path d="M2.5 6.2L4 5 5.5 6.2" stroke="#e3f2fd" stroke-width="0.5" fill="none"/></svg>
<div class="r" style="left:297.4px;top:48.6px;width:10px;height:10px;border:0.5px solid #dcdcdc;border-radius:1.5px;background:#e6e6e6"></div>
<svg class="r" style="left:298.9px;top:50.1px" width="8" height="8" viewBox="0 0 8 8"><path d="M1.6 6.6L6.4 1.2 7 1.8 2.3 7.1z" fill="#4a4a4a"/><path d="M1.2 7.4L1.6 6.6 2.3 7.1z" fill="#222"/><path d="M3 7.4h4.5" stroke="#b5b5b5" stroke-width="0.8"/></svg>
<div class="r" style="left:311.2px;top:48.6px;width:10px;height:10px;border:0.5px solid #dcdcdc;border-radius:1.5px;background:#fafafa"></div>
<svg class="r" style="left:312.7px;top:50.1px" width="8" height="8" viewBox="0 0 8 8"><rect x="0.5" y="1.8" width="7" height="5.6" fill="#5b2bbf"/><path d="M0.5 1.8h2.8l.6-1h-3.4z" fill="#5b2bbf"/><circle cx="2.8" cy="3.8" r="0.8" fill="#e8defa"/><path d="M1.8 6.2c0-1 .4-1.4 1-1.4s1 .4 1 1.4z" fill="#e8defa"/><circle cx="5.2" cy="3.8" r="0.8" fill="#e8defa"/><path d="M4.2 6.2c0-1 .4-1.4 1-1.4s1 .4 1 1.4z" fill="#e8defa"/></svg>
<div class="r" style="left:324.8px;top:48.6px;width:10px;height:10px;border:0.5px solid #dcdcdc;border-radius:1.5px;background:#fafafa"></div>
<svg class="r" style="left:326.3px;top:50.1px" width="8" height="8" viewBox="0 0 8 8"><circle cx="3.8" cy="2.4" r="1.6" fill="#f0b98a"/><path d="M2.1 2C2.1 0.4 5.5 0.4 5.5 2z" fill="#3b2f2a"/><path d="M0.8 7.8c0-2.6 1.4-3.4 3-3.4s3 .8 3 3.4z" fill="#2a9fd6"/><path d="M4.5 5.5L6.8 4.8 7.2 6.5z" fill="#f6c232"/></svg>
<div class="r" style="left:338px;top:48.6px;width:10px;height:10px;border:0.5px solid #dcdcdc;border-radius:1.5px;background:#fafafa"></div>
<svg class="r" style="left:339.5px;top:50.1px" width="8" height="8" viewBox="0 0 8 8"><path d="M0.8 4.2L6.6 0.8v6.8z" fill="#f6c232"/><rect x="0.6" y="3.2" width="1.6" height="2" fill="#e9a800"/></svg>
<svg class="r" style="left:364px;top:52px" width="8" height="7" viewBox="0 0 8 7"><rect x="0" y="0.5" width="8" height="6.5" fill="#eceff1"/><rect x="0" y="0.5" width="8" height="2" fill="#e53935"/><path d="M1 4h6M1 5.5h6" stroke="#90a4ae" stroke-width="0.6"/></svg>
<div class="t" style="left:374.3px;top:51.30px;font-size:5.43px;line-height:10px;color:#6d6d6d;transform:scaleX(1.0);transform-origin:0 50%;">Appointments</div>
<div class="r" style="left:363.3px;top:61.6px;width:253.2px;height:27.999999999999993px;border:0.6px solid #d4d4d4;border-radius:1px;background:#fff"></div>
<div class="t" style="left:450.5px;width:80px;text-align:center;top:72.00px;font-size:5.40px;line-height:10px;color:#3a3a3a;font-weight:700;transform:scaleX(1.0);transform-origin:50% 50%;">No data on file</div>
<svg class="r" style="left:364.5px;top:96.5px" width="8" height="7" viewBox="0 0 8 7"><rect x="0" y="0.5" width="8" height="6.5" fill="#eceff1"/><rect x="0" y="0.5" width="8" height="2" fill="#e53935"/><text x="2.3" y="6.8" font-size="5" font-family="Liberation Sans" font-weight="700" fill="#333">?</text></svg>
<div class="t" style="left:374.5px;top:95.30px;font-size:5.26px;line-height:10px;color:#6d6d6d;transform:scaleX(1.0);transform-origin:0 50%;">Contacts 101</div>
<div class="r" style="left:363.3px;top:106.2px;width:253.2px;height:40.8px;border:0.6px solid #d0d0d0;background:#fff"></div>
<div class="r" style="left:363.90000000000003px;top:106.8px;width:253.0px;height:7.8px;background:#f3f3f3;border-bottom:0.6px solid #d6d6d6"></div>
<div class="r" style="left:363.90000000000003px;top:115.19999999999999px;width:247.0px;height:8.1px;background:#cce8ff"></div>
<div class="r" style="left:363.90000000000003px;top:122.79999999999998px;width:247.0px;height:0.5px;background:#ececec"></div>
<div class="r" style="left:363.90000000000003px;top:130.89999999999998px;width:247.0px;height:0.5px;background:#ececec"></div>
<div class="r" style="left:363.90000000000003px;top:138.99999999999997px;width:247.0px;height:0.5px;background:#ececec"></div>
<div class="r" style="left:363.90000000000003px;top:147.09999999999997px;width:247.0px;height:0.5px;background:#ececec"></div>
<div class="r" style="left:413.3px;top:106.8px;width:0.6px;height:7.8px;background:#d6d6d6"></div>
<div class="r" style="left:413.3px;top:114.6px;width:0.6px;height:32.4px;background:#ececec"></div>
<div class="r" style="left:463px;top:106.8px;width:0.6px;height:7.8px;background:#d6d6d6"></div>
<div class="r" style="left:463px;top:114.6px;width:0.6px;height:32.4px;background:#ececec"></div>
<div class="r" style="left:512.5px;top:106.8px;width:0.6px;height:7.8px;background:#d6d6d6"></div>
<div class="r" style="left:512.5px;top:114.6px;width:0.6px;height:32.4px;background:#ececec"></div>
<div class="r" style="left:561.3px;top:106.8px;width:0.6px;height:7.8px;background:#d6d6d6"></div>
<div class="r" style="left:561.3px;top:114.6px;width:0.6px;height:32.4px;background:#ececec"></div>
<div class="t" style="left:365.5px;top:105.60px;font-size:5.06px;line-height:10px;color:#222;transform:scaleX(0.88);transform-origin:0 50%;-webkit-text-stroke:0.06px currentColor;">Due Date</div>
<div class="t" style="left:415.5px;top:105.60px;font-size:5.06px;line-height:10px;color:#222;transform:scaleX(0.88);transform-origin:0 50%;-webkit-text-stroke:0.06px currentColor;">Contact Date</div>
<div class="t" style="left:465.2px;top:105.60px;font-size:5.06px;line-height:10px;color:#222;transform:scaleX(0.88);transform-origin:0 50%;-webkit-text-stroke:0.06px currentColor;">Length</div>
<div class="t" style="left:514.7px;top:105.60px;font-size:5.06px;line-height:10px;color:#222;transform:scaleX(0.88);transform-origin:0 50%;-webkit-text-stroke:0.06px currentColor;">Provider</div>
<div class="t" style="left:563.5px;top:105.60px;font-size:5.06px;line-height:10px;color:#222;transform:scaleX(0.88);transform-origin:0 50%;-webkit-text-stroke:0.06px currentColor;">Work To Do</div>
<div class="t" style="left:365.5px;top:114.05px;font-size:5.06px;line-height:10px;color:#222;transform:scaleX(0.88);transform-origin:0 50%;-webkit-text-stroke:0.06px currentColor;">Mon 01/Jan/0001</div>
<div class="t" style="left:415.5px;top:114.05px;font-size:5.06px;line-height:10px;color:#222;transform:scaleX(0.88);transform-origin:0 50%;-webkit-text-stroke:0.06px currentColor;">Wed 07/Sep/2005</div>
<div class="t" style="left:465.2px;top:114.05px;font-size:5.06px;line-height:10px;color:#222;transform:scaleX(0.88);transform-origin:0 50%;-webkit-text-stroke:0.06px currentColor;">0h30</div>
<div class="t" style="left:514.7px;top:114.05px;font-size:5.06px;line-height:10px;color:#222;transform:scaleX(0.88);transform-origin:0 50%;-webkit-text-stroke:0.06px currentColor;">D</div>
<div class="t" style="left:563.5px;top:114.05px;font-size:5.06px;line-height:10px;color:#222;transform:scaleX(0.88);transform-origin:0 50%;-webkit-text-stroke:0.06px currentColor;">nj</div>
<div class="t" style="left:365.5px;top:122.15px;font-size:5.06px;line-height:10px;color:#222;transform:scaleX(0.88);transform-origin:0 50%;-webkit-text-stroke:0.06px currentColor;">Fri 22/Nov/2019</div>
<div class="t" style="left:415.5px;top:122.15px;font-size:5.06px;line-height:10px;color:#222;transform:scaleX(0.88);transform-origin:0 50%;-webkit-text-stroke:0.06px currentColor;">Fri 01/Nov/2019</div>
<div class="t" style="left:465.2px;top:122.15px;font-size:5.06px;line-height:10px;color:#222;transform:scaleX(0.88);transform-origin:0 50%;-webkit-text-stroke:0.06px currentColor;">0h10</div>
<div class="t" style="left:514.7px;top:122.15px;font-size:5.06px;line-height:10px;color:#222;transform:scaleX(0.88);transform-origin:0 50%;-webkit-text-stroke:0.06px currentColor;">ZZ</div>
<div class="t" style="left:563.5px;top:122.15px;font-size:5.06px;line-height:10px;color:#222;transform:scaleX(0.88);transform-origin:0 50%;-webkit-text-stroke:0.06px currentColor;">do toothy things</div>
<div class="t" style="left:365.5px;top:130.25px;font-size:5.06px;line-height:10px;color:#222;transform:scaleX(0.88);transform-origin:0 50%;-webkit-text-stroke:0.06px currentColor;">Fri 22/Nov/2019</div>
<div class="t" style="left:415.5px;top:130.25px;font-size:5.06px;line-height:10px;color:#222;transform:scaleX(0.88);transform-origin:0 50%;-webkit-text-stroke:0.06px currentColor;">Sat 02/Nov/2019</div>
<div class="t" style="left:465.2px;top:130.25px;font-size:5.06px;line-height:10px;color:#222;transform:scaleX(0.88);transform-origin:0 50%;-webkit-text-stroke:0.06px currentColor;">0h10</div>
<div class="t" style="left:514.7px;top:130.25px;font-size:5.06px;line-height:10px;color:#222;transform:scaleX(0.88);transform-origin:0 50%;-webkit-text-stroke:0.06px currentColor;">ZZ</div>
<div class="t" style="left:563.5px;top:130.25px;font-size:5.06px;line-height:10px;color:#222;transform:scaleX(0.88);transform-origin:0 50%;-webkit-text-stroke:0.06px currentColor;">do toothy things</div>
<div class="t" style="left:365.5px;top:138.35px;font-size:5.06px;line-height:10px;color:#222;transform:scaleX(0.88);transform-origin:0 50%;-webkit-text-stroke:0.06px currentColor;">Fri 22/Nov/2019</div>
<div class="t" style="left:415.5px;top:138.35px;font-size:5.06px;line-height:10px;color:#222;transform:scaleX(0.88);transform-origin:0 50%;-webkit-text-stroke:0.06px currentColor;">Sun 03/Nov/2019</div>
<div class="t" style="left:465.2px;top:138.35px;font-size:5.06px;line-height:10px;color:#222;transform:scaleX(0.88);transform-origin:0 50%;-webkit-text-stroke:0.06px currentColor;">0h10</div>
<div class="t" style="left:514.7px;top:138.35px;font-size:5.06px;line-height:10px;color:#222;transform:scaleX(0.88);transform-origin:0 50%;-webkit-text-stroke:0.06px currentColor;">ZZ</div>
<div class="t" style="left:563.5px;top:138.35px;font-size:5.06px;line-height:10px;color:#222;transform:scaleX(0.88);transform-origin:0 50%;-webkit-text-stroke:0.06px currentColor;">do toothy things</div>
<div class="r" style="left:610.7px;top:106.8px;width:6.2px;height:40.599999999999994px;background:#fbfbfb;border-left:0.6px solid #e3e3e3"></div>
<div class="r" style="left:610.7px;top:106.8px;width:6.2px;height:7.8px;background:#f3f3f3;border-bottom:0.6px solid #d6d6d6;border-left:0.6px solid #d6d6d6"></div>
<svg class="r" style="left:612.3px;top:115.2px" width="3" height="2" viewBox="0 0 3 2"><path d="M0.3 1.7L1.5 0.4 2.7 1.7" stroke="#c8c8c8" stroke-width="0.5" fill="none"/></svg>
<svg class="r" style="left:365px;top:153.5px" width="7.5" height="7" viewBox="0 0 7.5 7"><circle cx="4.5" cy="1.3" r="1.2" fill="#f6c232"/><ellipse cx="3.8" cy="4.6" rx="3.5" ry="2.3" fill="#f48fb1"/><rect x="1.5" y="5.8" width="1" height="1.2" fill="#f48fb1"/><rect x="5" y="5.8" width="1" height="1.2" fill="#f48fb1"/></svg>
<div class="t" style="left:374.5px;top:152.80px;font-size:5.20px;line-height:10px;color:#6d6d6d;transform:scaleX(1.0);transform-origin:0 50%;">Financial</div>
<div class="r" style="left:363.3px;top:164.0px;width:253.2px;height:32.5px;border:0.6px solid #d0d0d0;background:#fff"></div>
<div class="r" style="left:363.90000000000003px;top:164.6px;width:253.0px;height:7.6px;background:#f3f3f3;border-bottom:0.6px solid #d6d6d6"></div>
<div class="r" style="left:515.5999999999999px;top:164.6px;width:50.600000000000094px;height:7.6px;background:#d9d9d9"></div>
<div class="r" style="left:363.90000000000003px;top:172.79999999999998px;width:253.0px;height:8.0px;background:#cce8ff"></div>
<div class="r" style="left:363.90000000000003px;top:180.29999999999998px;width:253.0px;height:0.5px;background:#ececec"></div>
<div class="r" style="left:414.3px;top:164.6px;width:0.6px;height:7.6px;background:#d6d6d6"></div>
<div class="r" style="left:414.3px;top:172.2px;width:0.6px;height:8.0px;background:#ececec"></div>
<div class="r" style="left:465px;top:164.6px;width:0.6px;height:7.6px;background:#d6d6d6"></div>
<div class="r" style="left:465px;top:172.2px;width:0.6px;height:8.0px;background:#ececec"></div>
<div class="r" style="left:515.3px;top:164.6px;width:0.6px;height:7.6px;background:#d6d6d6"></div>
<div class="r" style="left:515.3px;top:172.2px;width:0.6px;height:8.0px;background:#ececec"></div>
<div class="r" style="left:566.2px;top:164.6px;width:0.6px;height:7.6px;background:#d6d6d6"></div>
<div class="r" style="left:566.2px;top:172.2px;width:0.6px;height:8.0px;background:#ececec"></div>
<div class="t" style="left:365.5px;top:163.30px;font-size:5.06px;line-height:10px;color:#222;transform:scaleX(0.88);transform-origin:0 50%;-webkit-text-stroke:0.06px currentColor;">Total Balance</div>
<div class="t" style="left:416.5px;top:163.30px;font-size:5.06px;line-height:10px;color:#222;transform:scaleX(0.88);transform-origin:0 50%;-webkit-text-stroke:0.06px currentColor;">Est. Insurance</div>
<div class="t" style="left:467.2px;top:163.30px;font-size:5.06px;line-height:10px;color:#222;transform:scaleX(0.88);transform-origin:0 50%;-webkit-text-stroke:0.06px currentColor;">Est. Pat. Owes</div>
<div class="t" style="left:517.5px;top:163.30px;font-size:5.06px;line-height:10px;color:#222;transform:scaleX(0.88);transform-origin:0 50%;-webkit-text-stroke:0.06px currentColor;">Charge Plans</div>
<div class="t" style="left:568.4000000000001px;top:163.30px;font-size:5.06px;line-height:10px;color:#222;transform:scaleX(0.88);transform-origin:0 50%;-webkit-text-stroke:0.06px currentColor;">Charge Plan Payments</div>
<div class="t" style="right:287.2px;top:171.60px;font-size:5.06px;line-height:10px;color:#222;transform:scaleX(0.88);transform-origin:100% 50%;-webkit-text-stroke:0.06px currentColor;">$190.51</div>
<div class="t" style="right:236.5px;top:171.60px;font-size:5.06px;line-height:10px;color:#222;transform:scaleX(0.88);transform-origin:100% 50%;-webkit-text-stroke:0.06px currentColor;">($190.51)</div>
<div class="t" style="right:186.20000000000005px;top:171.60px;font-size:5.06px;line-height:10px;color:#222;transform:scaleX(0.88);transform-origin:100% 50%;-webkit-text-stroke:0.06px currentColor;">$0.00</div>
<div class="t" style="right:135.29999999999995px;top:171.60px;font-size:5.06px;line-height:10px;color:#222;transform:scaleX(0.88);transform-origin:100% 50%;-webkit-text-stroke:0.06px currentColor;">$0.00</div>
<div class="t" style="right:84.0px;top:171.60px;font-size:5.06px;line-height:10px;color:#222;transform:scaleX(0.88);transform-origin:100% 50%;-webkit-text-stroke:0.06px currentColor;">$0.00</div>
<svg class="r" style="left:545px;top:165.8px" width="3" height="3" viewBox="0 0 3 3"><path d="M0.2 0.5h2.6L1.5 2.5z" fill="#555"/></svg>
<svg class="r" style="left:365px;top:203.5px" width="8" height="6.5" viewBox="0 0 8 6.5"><path d="M0.3 4C0.6 1.5 2.3 0.3 4 0.3s3.4 1.2 3.7 3.7c-.6-.5-1.2-.5-1.8 0-.6-.5-1.3-.5-1.9 0-.6-.5-1.3-.5-1.9 0-.6-.5-1.2-.5-1.8 0z" fill="#1565c0"/><path d="M4 3.5v2.7" stroke="#888" stroke-width="0.5"/></svg>
<div class="t" style="left:374.5px;top:203.10px;font-size:5.30px;line-height:10px;color:#6d6d6d;transform:scaleX(1.0);transform-origin:0 50%;">Insurance Coverage 2</div>
<div class="r" style="left:363.3px;top:213.3px;width:253.2px;height:32.19999999999999px;border:0.6px solid #d0d0d0;background:#fff"></div>
<div class="r" style="left:363.90000000000003px;top:213.9px;width:253.0px;height:8.2px;background:#f3f3f3;border-bottom:0.6px solid #d6d6d6"></div>
<div class="r" style="left:363.90000000000003px;top:222.7px;width:253.0px;height:8.1px;background:#cce8ff"></div>
<div class="r" style="left:363.90000000000003px;top:230.29999999999998px;width:253.0px;height:0.5px;background:#ececec"></div>
<div class="r" style="left:363.90000000000003px;top:238.39999999999998px;width:253.0px;height:0.5px;background:#ececec"></div>
<div class="r" style="left:406.2px;top:213.9px;width:0.6px;height:8.2px;background:#d6d6d6"></div>
<div class="r" style="left:406.2px;top:222.1px;width:0.6px;height:16.2px;background:#ececec"></div>
<div class="r" style="left:448px;top:213.9px;width:0.6px;height:8.2px;background:#d6d6d6"></div>
<div class="r" style="left:448px;top:222.1px;width:0.6px;height:16.2px;background:#ececec"></div>
<div class="r" style="left:490px;top:213.9px;width:0.6px;height:8.2px;background:#d6d6d6"></div>
<div class="r" style="left:490px;top:222.1px;width:0.6px;height:16.2px;background:#ececec"></div>
<div class="r" style="left:532.3px;top:213.9px;width:0.6px;height:8.2px;background:#d6d6d6"></div>
<div class="r" style="left:532.3px;top:222.1px;width:0.6px;height:16.2px;background:#ececec"></div>
<div class="r" style="left:574.3px;top:213.9px;width:0.6px;height:8.2px;background:#d6d6d6"></div>
<div class="r" style="left:574.3px;top:222.1px;width:0.6px;height:16.2px;background:#ececec"></div>
<div class="t" style="left:365.5px;top:212.90px;font-size:5.06px;line-height:10px;color:#222;transform:scaleX(0.88);transform-origin:0 50%;-webkit-text-stroke:0.06px currentColor;">Ordinal</div>
<div class="t" style="left:408.4px;top:212.90px;font-size:5.06px;line-height:10px;color:#222;transform:scaleX(0.88);transform-origin:0 50%;-webkit-text-stroke:0.06px currentColor;">Carrier</div>
<div class="t" style="left:450.2px;top:212.90px;font-size:5.06px;line-height:10px;color:#222;transform:scaleX(0.88);transform-origin:0 50%;-webkit-text-stroke:0.06px currentColor;">Plan</div>
<div class="t" style="left:492.2px;top:212.90px;font-size:5.06px;line-height:10px;color:#222;transform:scaleX(0.88);transform-origin:0 50%;-webkit-text-stroke:0.06px currentColor;">Subscriber</div>
<div class="t" style="left:534.5px;top:212.90px;font-size:5.06px;line-height:10px;color:#222;transform:scaleX(0.88);transform-origin:0 50%;-webkit-text-stroke:0.06px currentColor;">Relationship</div>
<div class="t" style="left:576.5px;top:212.90px;font-size:5.06px;line-height:10px;color:#222;transform:scaleX(0.88);transform-origin:0 50%;-webkit-text-stroke:0.06px currentColor;">Assignment</div>
<div class="t" style="left:365.5px;top:221.55px;font-size:5.06px;line-height:10px;color:#222;transform:scaleX(0.88);transform-origin:0 50%;-webkit-text-stroke:0.06px currentColor;">Primary</div>
<div class="t" style="left:408.4px;top:221.55px;font-size:5.06px;line-height:10px;color:#222;transform:scaleX(0.88);transform-origin:0 50%;-webkit-text-stroke:0.06px currentColor;">Great-West Life...</div>
<div class="t" style="left:450.2px;top:221.55px;font-size:5.06px;line-height:10px;color:#222;transform:scaleX(0.88);transform-origin:0 50%;-webkit-text-stroke:0.06px currentColor;">Great-West Life</div>
<div class="t" style="left:492.2px;top:221.55px;font-size:5.06px;line-height:10px;color:#222;transform:scaleX(0.88);transform-origin:0 50%;-webkit-text-stroke:0.06px currentColor;">Thompson, Mr. K...</div>
<div class="t" style="left:534.5px;top:221.55px;font-size:5.06px;line-height:10px;color:#222;transform:scaleX(0.88);transform-origin:0 50%;-webkit-text-stroke:0.06px currentColor;">Self</div>
<div class="t" style="left:576.5px;top:221.55px;font-size:5.06px;line-height:10px;color:#222;transform:scaleX(0.88);transform-origin:0 50%;-webkit-text-stroke:0.06px currentColor;">Yes</div>
<div class="t" style="left:365.5px;top:229.65px;font-size:5.06px;line-height:10px;color:#222;transform:scaleX(0.88);transform-origin:0 50%;-webkit-text-stroke:0.06px currentColor;">Secondary</div>
<div class="t" style="left:408.4px;top:229.65px;font-size:5.06px;line-height:10px;color:#222;transform:scaleX(0.88);transform-origin:0 50%;-webkit-text-stroke:0.06px currentColor;">The Empire Life I...</div>
<div class="t" style="left:450.2px;top:229.65px;font-size:5.06px;line-height:10px;color:#222;transform:scaleX(0.88);transform-origin:0 50%;-webkit-text-stroke:0.06px currentColor;">The Empire Life I...</div>
<div class="t" style="left:492.2px;top:229.65px;font-size:5.06px;line-height:10px;color:#222;transform:scaleX(0.88);transform-origin:0 50%;-webkit-text-stroke:0.06px currentColor;">Thompson, Mr. K...</div>
<div class="t" style="left:534.5px;top:229.65px;font-size:5.06px;line-height:10px;color:#222;transform:scaleX(0.88);transform-origin:0 50%;-webkit-text-stroke:0.06px currentColor;">Self</div>
<div class="t" style="left:576.5px;top:229.65px;font-size:5.06px;line-height:10px;color:#222;transform:scaleX(0.88);transform-origin:0 50%;-webkit-text-stroke:0.06px currentColor;">No</div>
<svg class="r" style="left:364.5px;top:252.5px" width="9" height="8" viewBox="0 0 9 8"><circle cx="2.5" cy="1.8" r="1.5" fill="#f2b37a"/><circle cx="6.5" cy="1.8" r="1.5" fill="#e57a4a"/><rect x="0.5" y="3.5" width="4" height="4.5" fill="#26a69a"/><rect x="4.5" y="3.5" width="4" height="4.5" fill="#1e88e5"/></svg>
<div class="t" style="left:374.5px;top:253.10px;font-size:5.29px;line-height:10px;color:#6d6d6d;transform:scaleX(1.0);transform-origin:0 50%;">Family Members 1</div>
<div class="r" style="left:579px;top:250.8px;width:10px;height:10px;border:0.5px solid #dcdcdc;border-radius:1.5px;background:#fafafa"></div>
<svg class="r" style="left:580.5px;top:252.3px" width="8" height="8" viewBox="0 0 8 8"><circle cx="4" cy="4" r="3.6" fill="#2e9a3a"/><path d="M4 2v4M2 4h4" stroke="#fff" stroke-width="1.1"/></svg>
<div class="r" style="left:592.3px;top:250.8px;width:10px;height:10px;border:0.5px solid #dcdcdc;border-radius:1.5px;background:#fafafa"></div>
<svg class="r" style="left:593.8px;top:252.3px" width="8" height="8" viewBox="0 0 8 8"><circle cx="4" cy="2.5" r="1.8" fill="#f2b37a"/><path d="M2.2 1.8C2.2 0.2 5.8 0.2 5.8 1.8z" fill="#3b2f2a"/><path d="M0.8 7.8c0-2.6 1.4-3.2 3.2-3.2s3.2.6 3.2 3.2z" fill="#26a69a"/><rect x="3.3" y="5.2" width="1.4" height="2.6" fill="#f6c232"/></svg>
<div class="r" style="left:605.8px;top:250.8px;width:10px;height:10px;border:0.5px solid #dcdcdc;border-radius:1.5px;background:#fafafa"></div>
<svg class="r" style="left:607.3px;top:252.3px" width="8" height="8" viewBox="0 0 8 8"><circle cx="4" cy="2" r="1.5" fill="#26a69a"/><path d="M2.5 3.5h3l-.5 2.5h-2z" fill="#26a69a"/><path d="M4 6v2" stroke="#26a69a" stroke-width="0.6"/></svg>
<div class="r" style="left:363.3px;top:264.3px;width:253.2px;height:33.0px;border:0.6px solid #d0d0d0;background:#fff"></div>
<div class="r" style="left:363.90000000000003px;top:264.90000000000003px;width:253.0px;height:8.2px;background:#f3f3f3;border-bottom:0.6px solid #d6d6d6"></div>
<div class="r" style="left:363.90000000000003px;top:273.70000000000005px;width:253.0px;height:8.1px;background:#cce8ff"></div>
<div class="r" style="left:363.90000000000003px;top:281.30000000000007px;width:253.0px;height:0.5px;background:#ececec"></div>
<div class="r" style="left:406.2px;top:264.90000000000003px;width:0.6px;height:8.2px;background:#d6d6d6"></div>
<div class="r" style="left:406.2px;top:273.1px;width:0.6px;height:8.1px;background:#ececec"></div>
<div class="r" style="left:448px;top:264.90000000000003px;width:0.6px;height:8.2px;background:#d6d6d6"></div>
<div class="r" style="left:448px;top:273.1px;width:0.6px;height:8.1px;background:#ececec"></div>
<div class="r" style="left:490px;top:264.90000000000003px;width:0.6px;height:8.2px;background:#d6d6d6"></div>
<div class="r" style="left:490px;top:273.1px;width:0.6px;height:8.1px;background:#ececec"></div>
<div class="r" style="left:532.3px;top:264.90000000000003px;width:0.6px;height:8.2px;background:#d6d6d6"></div>
<div class="r" style="left:532.3px;top:273.1px;width:0.6px;height:8.1px;background:#ececec"></div>
<div class="r" style="left:574.3px;top:264.90000000000003px;width:0.6px;height:8.2px;background:#d6d6d6"></div>
<div class="r" style="left:574.3px;top:273.1px;width:0.6px;height:8.1px;background:#ececec"></div>
<div class="t" style="left:365.5px;top:263.90px;font-size:5.06px;line-height:10px;color:#222;transform:scaleX(0.88);transform-origin:0 50%;-webkit-text-stroke:0.06px currentColor;">Name</div>
<div class="t" style="left:408.4px;top:263.90px;font-size:5.06px;line-height:10px;color:#222;transform:scaleX(0.88);transform-origin:0 50%;-webkit-text-stroke:0.06px currentColor;">Gender</div>
<div class="t" style="left:450.2px;top:263.90px;font-size:5.06px;line-height:10px;color:#222;transform:scaleX(0.88);transform-origin:0 50%;-webkit-text-stroke:0.06px currentColor;">Age</div>
<div class="t" style="left:492.2px;top:263.90px;font-size:5.06px;line-height:10px;color:#222;transform:scaleX(0.88);transform-origin:0 50%;-webkit-text-stroke:0.06px currentColor;">Account Holder</div>
<div class="t" style="left:534.5px;top:263.90px;font-size:5.06px;line-height:10px;color:#222;transform:scaleX(0.88);transform-origin:0 50%;-webkit-text-stroke:0.06px currentColor;">Householder</div>
<div class="t" style="left:576.5px;top:263.90px;font-size:5.06px;line-height:10px;color:#222;transform:scaleX(0.88);transform-origin:0 50%;-webkit-text-stroke:0.06px currentColor;">Active</div>
<div class="t" style="left:365.5px;top:272.55px;font-size:5.06px;line-height:10px;color:#222;transform:scaleX(0.88);transform-origin:0 50%;-webkit-text-stroke:0.06px currentColor;">Mrs. KIMBERLY T...</div>
<div class="t" style="left:408.4px;top:272.55px;font-size:5.06px;line-height:10px;color:#222;transform:scaleX(0.88);transform-origin:0 50%;-webkit-text-stroke:0.06px currentColor;">Female</div>
<div class="t" style="left:450.2px;top:272.55px;font-size:5.06px;line-height:10px;color:#222;transform:scaleX(0.88);transform-origin:0 50%;-webkit-text-stroke:0.06px currentColor;">42</div>
<div class="t" style="left:492.2px;top:272.55px;font-size:5.06px;line-height:10px;color:#222;transform:scaleX(0.88);transform-origin:0 50%;-webkit-text-stroke:0.06px currentColor;">No</div>
<div class="t" style="left:534.5px;top:272.55px;font-size:5.06px;line-height:10px;color:#222;transform:scaleX(0.88);transform-origin:0 50%;-webkit-text-stroke:0.06px currentColor;">No</div>
<div class="t" style="left:576.5px;top:272.55px;font-size:5.06px;line-height:10px;color:#222;transform:scaleX(0.88);transform-origin:0 50%;-webkit-text-stroke:0.06px currentColor;">Yes</div>
<svg class="r" style="left:363.8px;top:303.5px" width="9" height="8" viewBox="0 0 9 8"><circle cx="3" cy="1.5" r="1.2" fill="#f6c232"/><circle cx="6.5" cy="3" r="1.2" fill="#f6c232"/><path d="M0.3 8c0-2.5 1.2-3.5 2.7-3.5s2.7 1 2.7 3.5z" fill="#1e3a8a"/><rect x="4.5" y="5" width="4" height="3" fill="#64b5f6"/></svg>
<div class="t" style="left:374.5px;top:303.70px;font-size:5.10px;line-height:10px;color:#6d6d6d;transform:scaleX(1.0);transform-origin:0 50%;">Referrals</div>
<div class="r" style="left:552px;top:302.8px;width:10px;height:10px;border:0.5px solid #dcdcdc;border-radius:1.5px;background:#fafafa"></div>
<svg class="r" style="left:553.5px;top:304.3px" width="8" height="8" viewBox="0 0 8 8"><circle cx="4" cy="4" r="3.6" fill="#2e9a3a"/><path d="M4 2v4M2 4h4" stroke="#fff" stroke-width="1.1"/></svg>
<div class="r" style="left:565.3px;top:302.8px;width:10px;height:10px;border:0.5px solid #dcdcdc;border-radius:1.5px;background:#efefef"></div>
<svg class="r" style="left:566.8px;top:304.3px" width="8" height="8" viewBox="0 0 8 8"><path d="M1.5 6.5L6.5 1.5" stroke="#9a9a9a" stroke-width="0.8"/></svg>
<div class="r" style="left:578.8px;top:302.8px;width:10px;height:10px;border:0.5px solid #dcdcdc;border-radius:1.5px;background:#efefef"></div>
<svg class="r" style="left:580.3px;top:304.3px" width="8" height="8" viewBox="0 0 8 8"><rect x="2.2" y="2.3" width="3.6" height="5" fill="#757575"/><rect x="1.5" y="1.3" width="5" height="0.8" fill="#757575"/></svg>
<div class="r" style="left:592.3px;top:302.8px;width:10px;height:10px;border:0.5px solid #dcdcdc;border-radius:1.5px;background:#efefef"></div>
<svg class="r" style="left:593.8px;top:304.3px" width="8" height="8" viewBox="0 0 8 8"><circle cx="4" cy="2.3" r="1.6" fill="#555"/><path d="M1 7.5c0-2.4 1.2-3.2 3-3.2s3 .8 3 3.2z" fill="#555"/></svg>
<div class="r" style="left:605.8px;top:302.8px;width:10px;height:10px;border:0.5px solid #dcdcdc;border-radius:1.5px;background:#efefef"></div>
<svg class="r" style="left:607.3px;top:304.3px" width="8" height="8" viewBox="0 0 8 8"><path d="M1 7.5h6M1.5 6l5-4" stroke="#999" stroke-width="0.8"/><rect x="2" y="3" width="4" height="3" fill="none" stroke="#aaa" stroke-width="0.5"/></svg>
<div class="r" style="left:363.3px;top:315.1px;width:253.2px;height:27.399999999999977px;border:0.6px solid #d4d4d4;border-radius:1px;background:#fff"></div>
<div class="t" style="left:450.5px;width:80px;text-align:center;top:325.40px;font-size:5.40px;line-height:10px;color:#3a3a3a;font-weight:700;transform:scaleX(1.0);transform-origin:50% 50%;">No data on file</div>
<svg class="r" style="left:644.3000000000001px;top:49.199999999999996px" width="8.6" height="7.2" viewBox="0 0 8.6 7.2"><rect x="0.4" y="1.3" width="7.8" height="5.6" rx="0.9" fill="#f5c4c4"/><rect x="2.6" y="0.2" width="3.4" height="1.6" rx="0.4" fill="#f5c4c4"/><circle cx="4.3" cy="4.1" r="1.5" fill="#fdf0f0"/></svg>
<svg class="r" style="left:664.7px;top:48.5px" width="8.6" height="8.6" viewBox="0 0 8.6 8.6"><path d="M4.3 0.3L8.3 4.3 4.3 8.3 0.3 4.3z" fill="#f8c9b5"/></svg>
<svg class="r" style="left:685.1px;top:48.8px" width="8" height="8" viewBox="0 0 8 8"><path d="M1.6 6.4L4 4" stroke="#f3b6c8" stroke-width="2.8" stroke-linecap="round"/><path d="M4 4L6.4 1.6" stroke="#bfe7ee" stroke-width="2.8" stroke-linecap="round"/></svg>
<svg class="r" style="left:705.7px;top:48.8px" width="8" height="8" viewBox="0 0 8 8"><circle cx="4" cy="4" r="3.9" fill="#d8dcf1"/><path d="M4.2 6.8V3.6h1.1M3.2 4.6h2" stroke="#f4f5fb" stroke-width="0.8" fill="none"/></svg>
<svg class="r" style="left:624.2px;top:63px" width="40" height="40" viewBox="0 0 40 40"><defs><clipPath id="pcR"><circle cx="20" cy="20" r="19.1"/></clipPath>
<radialGradient id="fgR" cx="0.5" cy="0.3" r="0.7"><stop offset="0" stop-color="#e9d2c6"/><stop offset="0.55" stop-color="#d6b09c"/><stop offset="1" stop-color="#b68b76"/></radialGradient></defs>
<circle cx="20" cy="20" r="19.6" fill="#fff" stroke="#efefef" stroke-width="0.6"/>
<g clip-path="url(#pcR)">
<rect x="0" y="0" width="40" height="40" fill="#fdfdfd"/>
<path d="M33 6 L40 8 L40 22 L35 20z" fill="#ecebea"/>
<path d="M8.2 9 C9 5.5 13 4 18 4.2 C25 4.4 29 7 30 12 L31 21 C31 27 27 30 22 30 C17 30 12.5 27.5 10.5 24 L8.5 17z" fill="url(#fgR)"/>
<path d="M26 18 L33 20 L33.5 29 L27 29z" fill="#dcb7a3"/>
<path d="M6.2 9.5 C6 3.5 13 0.8 20.5 0.9 C28 1 33 4.5 34 11.5 L33.5 13 L30.5 13 L29.8 9.5 C27.5 6.5 24 5 18 4.8 C13.5 4.7 10.5 5.8 9 8.5 L8.4 11z" fill="#433733"/>
<path d="M24.5 4.6 C28 5.8 30 8.2 30.5 11.5 L30.8 13.5 L29.6 13 C29 9.5 27 6.5 24.5 4.6z" fill="#5e4d45"/>
<ellipse cx="31.3" cy="14.2" rx="2.5" ry="6.2" fill="#e9cdbd"/>
<path d="M33.2 19.2 C35 19 37.5 18.5 40 18.5 L40 40 L31 40 C33 34 34 27 33.2 19.2z" fill="#282828"/>
<path d="M0 40 L4 33.5 C8 31.5 12 32 15.5 34 L21 40z" fill="#282828"/>
<rect x="12" y="37" width="20" height="3" fill="#282828"/>
<path d="M8.5 15.2 C10.5 14.2 12.8 14 14.6 14.4 M16.5 11.6 C19 10.6 22.5 10.2 25 10.4" stroke="#5a463c" stroke-width="0.7" fill="none"/>
<ellipse cx="11" cy="18.2" rx="1.4" ry="0.75" fill="#6a5046" transform="rotate(-15 11 18.2)"/>
<ellipse cx="20.5" cy="14.4" rx="1.5" ry="0.8" fill="#6a5046" transform="rotate(-18 20.5 14.4)"/>
<path d="M16.8 17 C17.3 20 17 22 15.8 23" stroke="#a87c6a" stroke-width="0.6" fill="none"/>
<rect x="7.2" y="15.5" width="7.4" height="5" rx="1.4" fill="none" stroke="#2a2220" stroke-width="0.45" transform="rotate(-15 10.9 18)"/>
<rect x="15.2" y="11.2" width="10.6" height="5.6" rx="1.6" fill="none" stroke="#2a2220" stroke-width="0.45" transform="rotate(-18 20.5 14)"/>
<path d="M7.2 16.6 L14.6 14.4 M15.2 12.8 L25.8 9.6" stroke="#1d1817" stroke-width="0.65"/>
<path d="M25.8 11 L30 9.5 M7.2 17.8 L5.6 17.6" stroke="#2a2220" stroke-width="0.55"/>
<path d="M14.5 33 C15.5 28.5 19.5 24.8 24.5 25 C29 25.3 32.5 27.5 33.2 31.5 L32 36.7 C26 37.5 19 37.5 14.5 33z" fill="#d6a88f"/>
<path d="M16.5 30 C19.5 28.5 23.5 28.8 26.5 30 M20 32.8 C23 32.3 26 32.8 29 34.2" stroke="#a07360" stroke-width="0.55" fill="none"/>
<path d="M13.2 25.5 C15.5 26.5 18.5 26.3 20.7 25.3" stroke="#946a58" stroke-width="0.6" fill="none"/>
</g></svg>
<svg class="r" style="left:669px;top:74.5px" width="5.5" height="5.5" viewBox="0 0 5.5 5.5"><rect x="0" y="0" width="5.5" height="5.5" fill="#5c7a99"/><path d="M1.4 0v5.5M2.8 0v5.5M4.2 0v5.5" stroke="#c9d6e3" stroke-width="0.5"/></svg>
<div class="t" style="left:677px;top:72.70px;font-size:5.23px;line-height:10px;color:#333;transform:scaleX(0.88);transform-origin:0 50%;-webkit-text-stroke:0.06px currentColor;">22</div>
<svg class="r" style="left:688px;top:74px" width="6.5" height="6.5" viewBox="0 0 6.5 6.5"><circle cx="2.5" cy="4" r="1.9" fill="none" stroke="#2b8be0" stroke-width="1"/><path d="M3.8 2.7L5.8 0.7M4 0.6h1.9v1.9" stroke="#2b8be0" stroke-width="0.9" fill="none"/></svg>
<div class="t" style="left:696px;top:72.70px;font-size:5.23px;line-height:10px;color:#333;transform:scaleX(0.88);transform-origin:0 50%;-webkit-text-stroke:0.06px currentColor;">Male</div>
<svg class="r" style="left:670px;top:85px" width="6" height="6" viewBox="0 0 6 6"><rect x="0.6" y="1.6" width="4.8" height="1.3" fill="#f9c9a8"/><rect x="0.4" y="2.9" width="5.2" height="1.3" fill="#f48fb1"/><rect x="0.2" y="4.2" width="5.6" height="1.8" fill="#d81b60"/><rect x="2.6" y="0" width="0.8" height="1.6" fill="#f6a623"/></svg>
<div class="t" style="left:677px;top:83.40px;font-size:5.28px;line-height:10px;color:#333;transform:scaleX(0.88);transform-origin:0 50%;-webkit-text-stroke:0.06px currentColor;">25/Feb/1976 (43y)</div>
<svg class="r" style="left:625px;top:108.5px" width="7.5" height="7" viewBox="0 0 7.5 7"><rect x="0.3" y="0.3" width="6.9" height="6.4" fill="#d6e6f7" stroke="#8fb4dc" stroke-width="0.5"/><circle cx="2.8" cy="2.5" r="1" fill="#1e6bd6"/><path d="M1.4 5.5c0-1.4.6-1.9 1.4-1.9s1.4.5 1.4 1.9z" fill="#1e6bd6"/></svg>
<div class="t" style="left:633.6px;top:107.40px;font-size:4.94px;line-height:10px;color:#8a8a8a;transform:scaleX(0.88);transform-origin:0 50%;">Contact Information</div>
<svg class="r" style="left:634px;top:120.5px" width="6" height="6" viewBox="0 0 6 6"><path d="M0.8 5.7C0.4 3.5 2.2 0.8 5 0.4l0.8 1.2C4 2 2.7 3.3 2.4 5z" fill="#1a9b8c"/></svg>
<div class="t" style="left:641.6px;top:119.90px;font-size:4.77px;line-height:10px;color:#1a1a1a;transform:scaleX(0.88);transform-origin:0 50%;-webkit-text-stroke:0.06px currentColor;">(905) 634-5544</div>
<svg class="r" style="left:625px;top:132.5px" width="8" height="4.5" viewBox="0 0 8 4.5"><path d="M1.7 4.3C0.4 4.3 0 2.9 1.1 2.5 1.1 1.2 2.7.8 3.4 1.5 4 0 6.4.3 6.4 2 7.4 2.2 7.4 4.3 6.2 4.3z" fill="#a9cbe9"/></svg>
<div class="t" style="left:634px;top:130.00px;font-size:5.00px;line-height:10px;color:#8a8a8a;transform:scaleX(0.88);transform-origin:0 50%;">Portal</div>
<div class="t" style="left:634px;top:137.90px;font-size:4.55px;line-height:10px;color:#1a1a1a;transform:scaleX(0.88);transform-origin:0 50%;-webkit-text-stroke:0.06px currentColor;">NOT REGISTERED</div>
<svg class="r" style="left:626px;top:149px" width="6" height="6.5" viewBox="0 0 6 6.5"><circle cx="3" cy="2.3" r="1.6" fill="#f0c27a"/><path d="M1.2 1.7C1.2 0.2 4.8 0.2 4.8 1.7z" fill="#2b4a56"/><path d="M0.2 6.5c0-2.4 1.2-2.9 2.8-2.9s2.8.5 2.8 2.9z" fill="#2f6f78"/></svg>
<div class="t" style="left:634px;top:147.40px;font-size:5.00px;line-height:10px;color:#8a8a8a;transform:scaleX(0.88);transform-origin:0 50%;">Provider(s)</div>
<div class="t" style="left:634px;top:154.70px;font-size:4.77px;line-height:10px;color:#8a8a8a;transform:scaleX(0.88);transform-origin:0 50%;">Location</div>
<div class="t" style="left:634px;top:160.40px;font-size:5.23px;line-height:10px;color:#1a1a1a;transform:scaleX(0.88);transform-origin:0 50%;-webkit-text-stroke:0.06px currentColor;">Default - Main Street Dental Office</div>
<div class="t" style="left:634px;top:166.70px;font-size:4.77px;line-height:10px;color:#8a8a8a;transform:scaleX(0.88);transform-origin:0 50%;">Dentist</div>
<div class="t" style="left:634px;top:172.40px;font-size:5.23px;line-height:10px;color:#1a1a1a;transform:scaleX(0.88);transform-origin:0 50%;-webkit-text-stroke:0.06px currentColor;">Dr. Kim Black</div>
<div class="t" style="left:634px;top:178.70px;font-size:4.77px;line-height:10px;color:#8a8a8a;transform:scaleX(0.88);transform-origin:0 50%;">Hygienist</div>
<div class="t" style="left:634px;top:184.40px;font-size:5.23px;line-height:10px;color:#1a1a1a;transform:scaleX(0.88);transform-origin:0 50%;-webkit-text-stroke:0.06px currentColor;">Diane Wekarski</div>
<svg class="r" style="left:626px;top:195px" width="7" height="7" viewBox="0 0 7 7"><path d="M0.8 6.3L4.5 2.5" stroke="#e07020" stroke-width="1.3" stroke-linecap="round"/><circle cx="5.3" cy="1.7" r="1.3" fill="#333"/></svg>
<div class="t" style="left:634px;top:194.40px;font-size:5.00px;line-height:10px;color:#8a8a8a;transform:scaleX(0.88);transform-origin:0 50%;">Hygiene</div>
<div class="t" style="left:634px;top:200.70px;font-size:4.77px;line-height:10px;color:#8a8a8a;transform:scaleX(0.88);transform-origin:0 50%;">Last Recall Date</div>
<div class="t" style="left:676px;top:200.40px;font-size:5.23px;line-height:10px;color:#1a1a1a;transform:scaleX(0.88);transform-origin:0 50%;-webkit-text-stroke:0.06px currentColor;">Tue 7/Dec/2004</div>
<div class="t" style="left:634px;top:207.10px;font-size:4.77px;line-height:10px;color:#8a8a8a;transform:scaleX(0.88);transform-origin:0 50%;">Recall Interval</div>
<div class="t" style="left:664.5px;top:205.90px;font-size:5.00px;line-height:10px;color:#222;transform:scaleX(0.88);transform-origin:0 50%;-webkit-text-stroke:0.06px currentColor;">9</div>
<div class="t" style="left:676px;top:207.10px;font-size:4.77px;line-height:10px;color:#8a8a8a;transform:scaleX(0.88);transform-origin:0 50%;">Units</div>
<div class="t" style="left:689px;top:205.90px;font-size:5.00px;line-height:10px;color:#222;transform:scaleX(0.88);transform-origin:0 50%;-webkit-text-stroke:0.06px currentColor;">3</div>
<div class="t" style="left:634px;top:213.30px;font-size:4.77px;line-height:10px;color:#8a8a8a;transform:scaleX(0.88);transform-origin:0 50%;">Scaling Interval</div>
<div class="t" style="left:664.5px;top:212.10px;font-size:5.00px;line-height:10px;color:#222;transform:scaleX(0.88);transform-origin:0 50%;-webkit-text-stroke:0.06px currentColor;">0</div>
<div class="t" style="left:676px;top:213.30px;font-size:4.77px;line-height:10px;color:#8a8a8a;transform:scaleX(0.88);transform-origin:0 50%;">Units</div>
<div class="t" style="left:689px;top:212.10px;font-size:5.00px;line-height:10px;color:#222;transform:scaleX(0.88);transform-origin:0 50%;-webkit-text-stroke:0.06px currentColor;">0</div>
<svg class="r" style="left:625.5px;top:223.5px" width="7" height="7" viewBox="0 0 7 7"><rect x="0" y="0.5" width="7" height="6.5" fill="#eceff1"/><rect x="0" y="0.5" width="7" height="2" fill="#e53935"/><path d="M1 4h5M1 5.5h5" stroke="#90a4ae" stroke-width="0.6"/></svg>
<div class="t" style="left:634px;top:222.70px;font-size:4.72px;line-height:10px;color:#8a8a8a;transform:scaleX(0.88);transform-origin:0 50%;">Appointments</div>
<div class="t" style="left:661.3px;top:222.10px;font-size:5.00px;line-height:10px;color:#222;transform:scaleX(0.88);transform-origin:0 50%;-webkit-text-stroke:0.06px currentColor;">0</div>
<svg class="r" style="left:625.5px;top:234.5px" width="7" height="7" viewBox="0 0 7 7"><rect x="0" y="0.5" width="7" height="6.5" fill="#eceff1"/><rect x="0" y="0.5" width="7" height="2" fill="#e53935"/><text x="2" y="6.8" font-size="4.5" font-family="Liberation Sans" font-weight="700" fill="#333">?</text></svg>
<div class="t" style="left:634px;top:233.70px;font-size:4.77px;line-height:10px;color:#8a8a8a;transform:scaleX(0.88);transform-origin:0 50%;">Contacts</div>
<div class="t" style="left:651.5px;top:233.10px;font-size:5.00px;line-height:10px;color:#222;transform:scaleX(0.88);transform-origin:0 50%;-webkit-text-stroke:0.06px currentColor;">101</div>
<svg class="r" style="left:625.5px;top:245.5px" width="7" height="6.5" viewBox="0 0 7 6.5"><rect x="0" y="0" width="7" height="6.5" fill="#bfdcf6"/><rect x="0" y="0" width="7" height="2" fill="#2f80d8"/><path d="M1 3.6h5M1 5h5" stroke="#6aa8e8" stroke-width="0.5"/></svg>
<div class="t" style="left:634px;top:244.40px;font-size:5.00px;line-height:10px;color:#8a8a8a;transform:scaleX(0.88);transform-origin:0 50%;">Past 24 Months</div>
<svg class="r" style="left:625.5px;top:257px" width="7.5" height="5.5" viewBox="0 0 7.5 5.5"><path d="M0.3 3.8C0.6 1.4 2.3 0.3 3.75 0.3s3.15 1.1 3.45 3.5c-.6-.5-1.2-.5-1.7 0-.6-.5-1.2-.5-1.75 0-.55-.5-1.2-.5-1.75 0-.55-.5-1.15-.5-1.7 0z" fill="#1565c0"/></svg>
<div class="t" style="left:634px;top:255.70px;font-size:4.77px;line-height:10px;color:#8a8a8a;transform:scaleX(0.88);transform-origin:0 50%;">Insurance</div>
<div class="t" style="left:653px;top:255.10px;font-size:5.00px;line-height:10px;color:#222;transform:scaleX(0.88);transform-origin:0 50%;-webkit-text-stroke:0.06px currentColor;">2</div>
<div class="t" style="left:635px;top:262.70px;font-size:4.77px;line-height:10px;color:#8a8a8a;transform:scaleX(0.88);transform-origin:0 50%;">Primary</div>
<div class="t" style="left:669px;top:262.00px;font-size:4.89px;line-height:10px;color:#1a1a1a;transform:scaleX(0.88);transform-origin:0 50%;-webkit-text-stroke:0.06px currentColor;">Great-West Life</div>
<div class="t" style="left:669px;top:267.20px;font-size:4.89px;line-height:10px;color:#1a1a1a;transform:scaleX(0.88);transform-origin:0 50%;-webkit-text-stroke:0.06px currentColor;">Assurance Company</div>
<div class="t" style="right:40px;top:273.30px;font-size:4.77px;line-height:10px;color:#8a8a8a;transform:scaleX(0.88);transform-origin:100% 50%;">Plan</div>
<div class="t" style="left:669px;top:272.90px;font-size:4.89px;line-height:10px;color:#1a1a1a;transform:scaleX(0.88);transform-origin:0 50%;-webkit-text-stroke:0.06px currentColor;">Great-West Life</div>
<div class="t" style="right:40px;top:279.10px;font-size:4.77px;line-height:10px;color:#8a8a8a;transform:scaleX(0.88);transform-origin:100% 50%;">Subscriber</div>
<div class="t" style="left:669px;top:278.80px;font-size:4.89px;line-height:10px;color:#1a1a1a;transform:scaleX(0.88);transform-origin:0 50%;-webkit-text-stroke:0.06px currentColor;">Thompson, Mr. Kevin</div>
<div class="t" style="right:40px;top:285.10px;font-size:4.77px;line-height:10px;color:#8a8a8a;transform:scaleX(0.88);transform-origin:100% 50%;">Relationship</div>
<div class="t" style="left:669px;top:285.00px;font-size:4.89px;line-height:10px;color:#1a1a1a;transform:scaleX(0.88);transform-origin:0 50%;-webkit-text-stroke:0.06px currentColor;">Self</div>
<div class="t" style="right:40px;top:290.70px;font-size:4.77px;line-height:10px;color:#8a8a8a;transform:scaleX(0.88);transform-origin:100% 50%;">Assignment</div>
<div class="t" style="left:669px;top:290.00px;font-size:4.89px;line-height:10px;color:#1a1a1a;transform:scaleX(0.88);transform-origin:0 50%;-webkit-text-stroke:0.06px currentColor;">True</div>
<div class="t" style="left:634px;top:300.70px;font-size:4.77px;line-height:10px;color:#8a8a8a;transform:scaleX(0.88);transform-origin:0 50%;">Secondary</div>
<div class="t" style="left:669px;top:300.00px;font-size:4.89px;line-height:10px;color:#1a1a1a;transform:scaleX(0.88);transform-origin:0 50%;-webkit-text-stroke:0.06px currentColor;">The Empire Life Insurance</div>
<div class="t" style="left:669px;top:304.40px;font-size:4.89px;line-height:10px;color:#1a1a1a;transform:scaleX(0.88);transform-origin:0 50%;-webkit-text-stroke:0.06px currentColor;">Company</div>
<div class="t" style="right:40px;top:312.70px;font-size:4.77px;line-height:10px;color:#8a8a8a;transform:scaleX(0.88);transform-origin:100% 50%;">Plan</div>
<div class="t" style="left:669px;top:311.00px;font-size:4.89px;line-height:10px;color:#1a1a1a;transform:scaleX(0.88);transform-origin:0 50%;-webkit-text-stroke:0.06px currentColor;">The Empire Life Insurance</div>
<div class="t" style="left:669px;top:316.40px;font-size:4.89px;line-height:10px;color:#1a1a1a;transform:scaleX(0.88);transform-origin:0 50%;-webkit-text-stroke:0.06px currentColor;">Company</div>
<div class="t" style="right:40px;top:320.70px;font-size:4.77px;line-height:10px;color:#8a8a8a;transform:scaleX(0.88);transform-origin:100% 50%;">Subscriber</div>
<div class="t" style="left:669px;top:320.00px;font-size:4.89px;line-height:10px;color:#1a1a1a;transform:scaleX(0.88);transform-origin:0 50%;-webkit-text-stroke:0.06px currentColor;">Thompson, Mr. Kevin</div>
<div class="t" style="right:40px;top:326.70px;font-size:4.77px;line-height:10px;color:#8a8a8a;transform:scaleX(0.88);transform-origin:100% 50%;">Relationship</div>
<div class="t" style="left:669px;top:326.30px;font-size:4.89px;line-height:10px;color:#1a1a1a;transform:scaleX(0.88);transform-origin:0 50%;-webkit-text-stroke:0.06px currentColor;">Self</div>
<div class="t" style="right:40px;top:332.40px;font-size:4.77px;line-height:10px;color:#8a8a8a;transform:scaleX(0.88);transform-origin:100% 50%;">Assignment</div>
<div class="t" style="left:669px;top:331.70px;font-size:4.89px;line-height:10px;color:#1a1a1a;transform:scaleX(0.88);transform-origin:0 50%;-webkit-text-stroke:0.06px currentColor;">False</div>
<svg class="r" style="left:625.5px;top:346.5px" width="6.5" height="6.5" viewBox="0 0 6.5 6.5"><circle cx="3.6" cy="1.2" r="1.1" fill="#f6c232"/><ellipse cx="3.2" cy="4.2" rx="3" ry="2" fill="#f48fb1"/><rect x="1.2" y="5.4" width="0.9" height="1.1" fill="#f48fb1"/><rect x="4.2" y="5.4" width="0.9" height="1.1" fill="#f48fb1"/></svg>
<div class="t" style="left:634px;top:345.20px;font-size:5.00px;line-height:10px;color:#8a8a8a;transform:scaleX(0.88);transform-origin:0 50%;">Financial</div>
<div class="t" style="right:40px;top:352.50px;font-size:4.77px;line-height:10px;color:#8a8a8a;transform:scaleX(0.88);transform-origin:100% 50%;">Acct. Holder</div>
<svg class="r" style="left:652.5px;top:360px" width="6" height="6.5" viewBox="0 0 6 6.5"><rect x="0" y="0" width="6" height="6.5" fill="#5c7a99"/><path d="M1.5 0v6.5M3 0v6.5M4.5 0v6.5" stroke="#c9d6e3" stroke-width="0.5"/></svg>
<div class="t" style="left:667px;top:358.70px;font-size:5.00px;line-height:10px;color:#1a1a1a;transform:scaleX(0.88);transform-origin:0 50%;-webkit-text-stroke:0.06px currentColor;">22</div>
<div class="t" style="right:40px;top:366.70px;font-size:4.77px;line-height:10px;color:#8a8a8a;transform:scaleX(0.88);transform-origin:100% 50%;">Total</div>
<div class="t" style="left:667px;top:366.00px;font-size:5.23px;line-height:10px;color:#1a1a1a;transform:scaleX(0.88);transform-origin:0 50%;-webkit-text-stroke:0.06px currentColor;">$190.51</div>
<div class="r" style="left:622px;top:374.5px;width:78px;height:2.3px;overflow:hidden">
<div class="t" style="right:40px;top:-1.2px;font-size:4.77px;line-height:6px;color:#8a8a8a;transform:scaleX(0.88);transform-origin:100% 50%">Est. Insurance</div>
<div class="t" style="left:45px;top:-1.2px;font-size:5.2px;line-height:6px;color:#1a1a1a;transform:scaleX(0.88);transform-origin:0 50%">($190.51)</div>
</div>
<div class="r" style="left:621.8px;top:380px;width:57px;height:12px;background:#1f1f1f"></div>
<div class="r" style="left:678.8px;top:380px;width:21.2px;height:12px;background:#6b6b6b"></div>
<div class="t" style="left:625.0px;width:50px;text-align:center;top:380.80px;font-size:5.58px;line-height:10px;color:#fff;transform:scaleX(0.95);transform-origin:50% 50%;-webkit-text-stroke:0.06px currentColor;">Personal</div>
<div class="r" style="left:640.3px;top:388.7px;width:19.6px;height:0.6px;background:#e8e8e8"></div>
<div class="t" style="left:698.6px;top:380.80px;font-size:5.30px;line-height:10px;color:#e0e0e0;transform:scaleX(1.0);transform-origin:0 50%;">C</div>
<div class="r" style="left:665px;top:393px;width:14px;height:7px;background:#f8f8f8;border-left:0.6px solid #d0d0d0;border-right:0.6px solid #d0d0d0"></div>
<div class="r" style="left:692px;top:393px;width:0.6px;height:7px;background:#d8d8d8"></div>
<div class="t" style="left:666.8px;top:392.00px;font-size:5.23px;line-height:10px;color:#222;transform:scaleX(0.88);transform-origin:0 50%;-webkit-text-stroke:0.06px currentColor;">NUM</div>
</body></html>
